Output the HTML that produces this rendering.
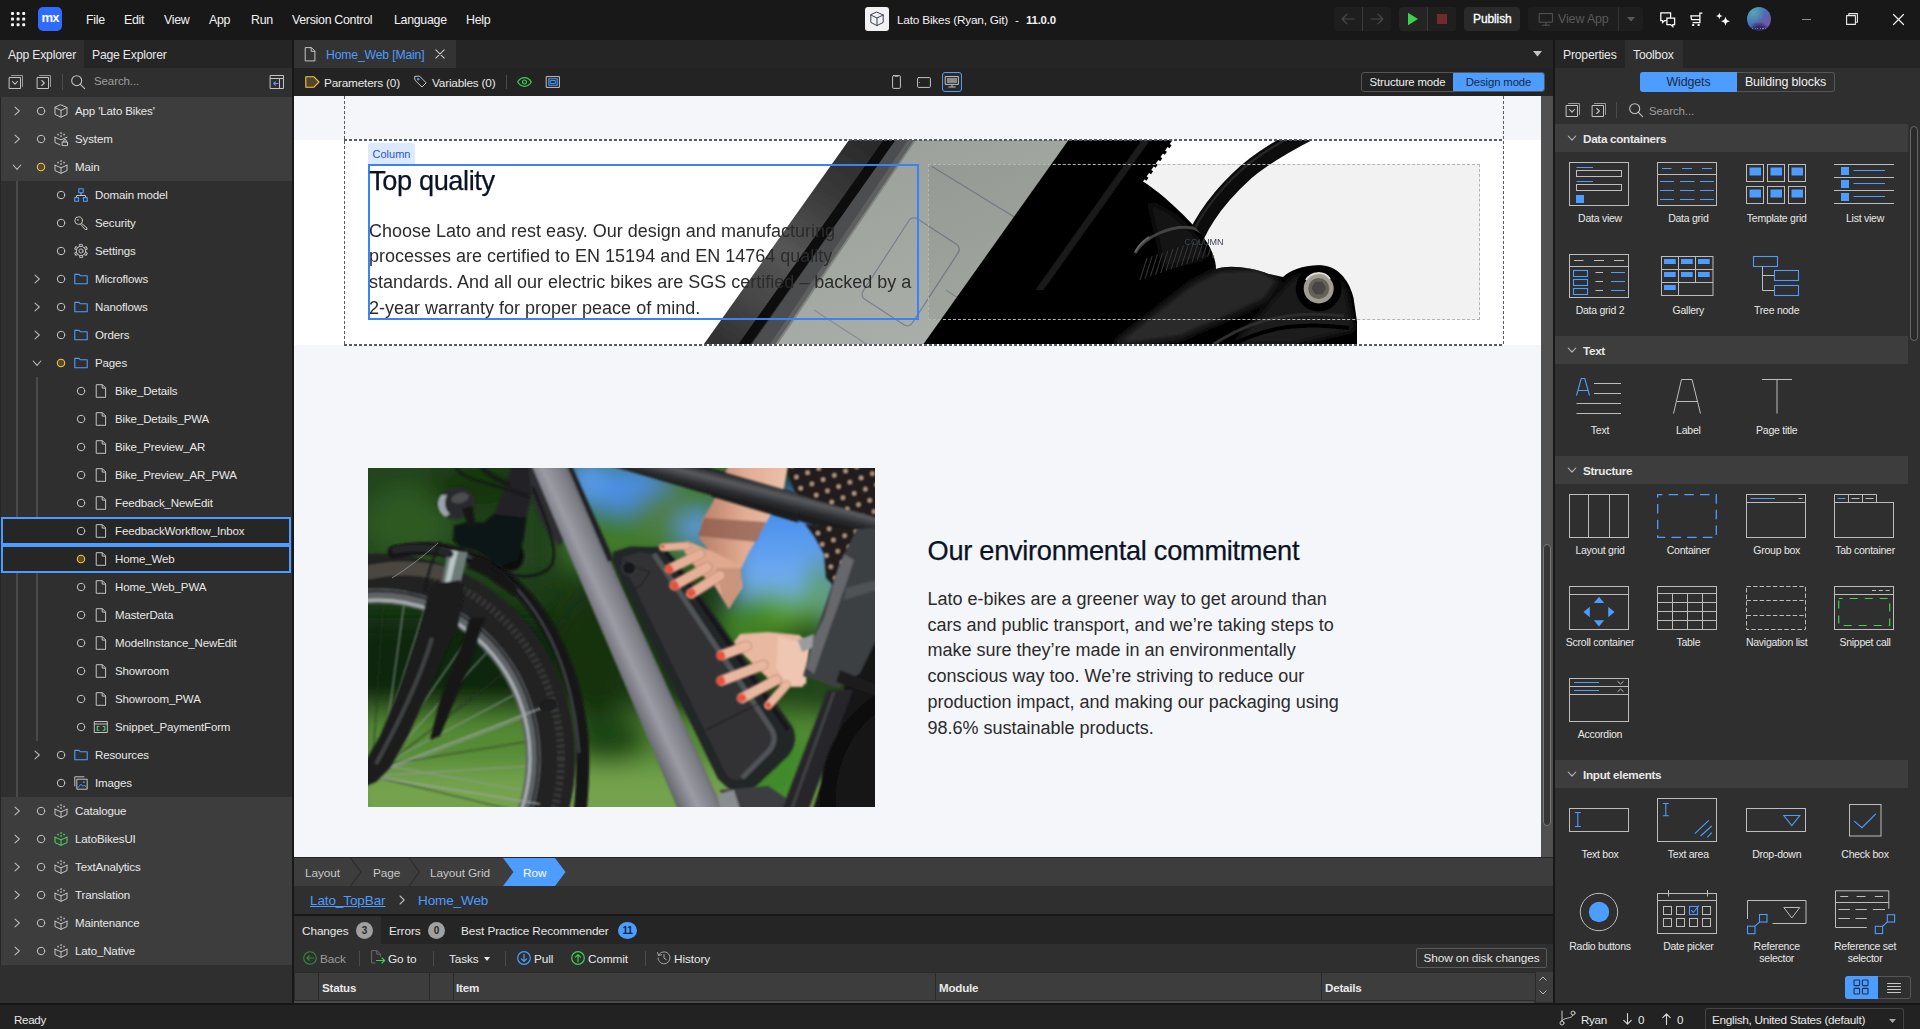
<!DOCTYPE html>
<html lang="en"><head><meta charset="utf-8"><title>Lato Bikes (Ryan, Git) - 11.0.0</title>
<style>
*{box-sizing:border-box;margin:0;padding:0}
html,body{width:1920px;height:1029px;overflow:hidden;background:#181818}
body{position:relative;font-family:"Liberation Sans",sans-serif;font-size:11.6px;color:#e8e8e8;letter-spacing:-0.1px}
i{position:absolute;display:block;font-style:normal;line-height:0}
b{position:absolute;display:block;font-weight:normal}
svg{display:block;overflow:visible}
.t{position:absolute;white-space:nowrap;line-height:28px;top:0}
.vsep{width:1px;background:#4a4a4a}
#title{position:absolute;left:0;top:0;width:1920px;height:40px;background:#181818}
#left{position:absolute;left:0;top:40px;width:292px;height:963px;background:#2f2f2f}
.ptabs{position:relative;height:28px;background:#252525;display:flex}
.ptab{position:relative;height:28px;font-size:12.2px;letter-spacing:-0.2px}
.ptab .t,.ctab .t,.ctool .t{top:1px}
.ptab.act{background:#2f2f2f}
.ptool{position:relative;height:28px;background:#2f2f2f}
.ph{position:absolute;top:-1px;line-height:28px;color:#9e9e9e;font-size:11.5px}
.tree{position:absolute;left:0;top:57px;width:292px;height:906px}
.tree:before{content:"";position:absolute;left:0;top:0;width:1px;height:868px;background:#262626;z-index:3}
.row{position:relative;height:28px;margin-left:0}
.row.mod{background:#3d3d3d}
.row.sel{outline:2px solid #4d9cff;outline-offset:-2px;background:#262626;margin-left:1px;margin-right:1px}
.row.sel>*{margin-left:-1px}
.row .t{font-size:11.5px;letter-spacing:-0.12px}
.guide{width:2px;background:#4a4a4a}
.mx{position:absolute;left:38px;top:7px;width:24px;height:24px;border-radius:5px;background:#2f6bff;color:#fff;font-weight:bold;font-size:13px;text-align:center;line-height:22px;letter-spacing:-0.8px}
.menu{position:absolute;top:0;line-height:41px;font-size:12.4px;color:#f2f2f2;white-space:nowrap;letter-spacing:-0.3px}
.appico{position:absolute;left:865px;top:7px;width:24px;height:24px;border-radius:3px;background:#f2f2f2;padding:1px}
.apptitle{position:absolute;top:0;line-height:41px;font-size:11.8px;color:#f2f2f2;white-space:nowrap;letter-spacing:-0.2px}
.tbtn{position:absolute;top:7px;height:24px;border-radius:4px;background:#1e1e1e}
.avatar{position:absolute;left:1747px;top:7px;width:24px;height:24px;border-radius:50%;background:radial-gradient(circle at 50% 108%,#2f2a66 0 22%,transparent 40%),radial-gradient(circle at 28% 22%,#56a3b6 0,transparent 45%),radial-gradient(circle at 85% 70%,#7259a8 0,transparent 55%),linear-gradient(135deg,#4a8fb0,#4870b4 50%,#62509f)}
.avatar:after{content:"";position:absolute;left:5px;top:20.5px;width:14px;height:1px;background:repeating-linear-gradient(90deg,rgba(255,255,255,.4) 0 1.2px,transparent 1.2px 2.6px);border-radius:1px}
#center{position:absolute;left:294px;top:40px;width:1259px;height:874px;background:#252525}
.ctabs{position:relative;height:28px;background:#252525}
.ctab{position:absolute;left:0;top:0;width:162px;height:28px;background:#333}
.ctool{position:relative;height:28px;background:#232323}
.seg{position:absolute;top:4px;height:20px;display:flex;border:1px solid #555;border-radius:3px;font-size:11.4px;letter-spacing:-0.15px;line-height:18px;text-align:center;overflow:hidden;white-space:nowrap}
.seg .s1{background:#4d9cff;color:#1b2a40}
.seg .s0{color:#f0f0f0}
#canvas{position:absolute;left:0;top:56px;width:1247px;height:761px;background:#f5f6fa;overflow:hidden;font-family:"Liberation Sans",sans-serif;letter-spacing:0}
.white{position:absolute;left:0;top:44px;width:1247px;height:205px;background:#fff}
.vd{width:1px;background:repeating-linear-gradient(180deg,#565b66 0 3px,transparent 3px 5px)}
.hdash{height:2px;background:repeating-linear-gradient(90deg,#565b66 0 3px,transparent 3px 5px)}

.collabel{position:absolute;left:74px;top:47px;width:47px;height:21px;background:#dbeafe;color:#2b4fd8;font-size:11px;line-height:23px;text-align:center;border-radius:3px 3px 0 0}
.col1{position:absolute;left:74px;top:68px;width:551px;height:156px;border:2px solid #3b82f6}
.col2{position:absolute;left:634px;top:68px;width:552px;height:156px;border:1px dashed #b5b5b5;background:rgba(0,0,0,0.05);color:#3a4150;font-size:9px;text-align:center;line-height:154px}
.hd{-webkit-text-stroke:0.25px #0a1325;position:absolute;font-size:27.2px;font-weight:normal;color:#0a1325;line-height:34px;white-space:nowrap;letter-spacing:-0.05px}
.bd{position:absolute;font-size:18px;line-height:25.71px;color:#2b2b2b;white-space:nowrap}

#p2{position:absolute;left:74px;top:372px;width:507px;height:339px;background:#456}
.vscroll{position:absolute;left:1247px;top:56px;width:12px;height:761px;background:#505050}
.vscroll .thumb{left:2px;top:448px;width:8px;height:282px;border-radius:4px;background:#363636;border:1px solid #777}
.crumbs{position:absolute;left:0;top:818px;width:1259px;height:28px;background:#3d3d3d;font-size:11.8px;color:#c8c8c8}
.crumbs .t,.path .t,.btabs .t,.btool .t,.thead .t{top:1px}
.path{position:absolute;left:0;top:846px;width:1259px;height:28px;background:#2f2f2f;font-size:13.5px;color:#4d9cff}
#right{position:absolute;left:1555px;top:40px;width:365px;height:963px;background:#2f2f2f}
.seg2{position:absolute;top:4px;height:20px;display:flex;border-radius:3px;font-size:12.4px;line-height:20px;text-align:center;white-space:nowrap}
.seg2 .s1{background:#4d9cff;color:#1b2a40;border-radius:3px 0 0 3px}
.seg2 .s0{color:#f0f0f0;border:1px solid #555;border-left:none;border-radius:0 3px 3px 0;line-height:18px}
.tbx{position:absolute;left:0;top:84px;width:353px;height:880px;overflow:hidden}
.sech{position:relative;height:28px;padding-left:1px;background:#3d3d3d;font-weight:bold;font-size:11.7px;letter-spacing:-0.3px}
.sech .t{top:0.5px}
.grid{display:flex;flex-wrap:wrap;padding-left:1px;width:360px}
.w{position:relative;width:88.35px;height:92px;text-align:center;font-size:10.5px;line-height:12px;letter-spacing:-0.25px}
.w svg{position:absolute;left:13px;top:10px}
.w span{position:absolute;left:-10px;width:108px;top:60.4px;display:block}
.sb2{left:355px;top:86px;width:8px;height:215px;border:1px solid #666;border-radius:4px;background:#2a2a2a}
.vt{position:absolute;left:290px;top:936px;width:66px;height:23px;display:flex}
.vt .a{position:relative;width:33px;height:23px;background:#4d9cff;border-radius:3px 0 0 3px}
.vt .b{position:relative;width:33px;height:23px;border:1px solid #555;border-left:none;border-radius:0 3px 3px 0}
#bottom{position:absolute;left:294px;top:916px;width:1259px;height:87px;background:#2f2f2f}
.btabs{position:relative;height:28px;background:#252525;font-size:11.8px}
.bt{position:absolute;top:0;height:28px}
.bt.act{background:#2f2f2f}
.bdg{position:absolute;top:5.5px;width:17px;height:17px;border-radius:50%;background:#a0a0a0;color:#2a2a2a;font-style:normal;font-size:10px;font-weight:bold;text-align:center;line-height:17px;letter-spacing:-0.3px}
.bdg.blue{background:#4d9cff;color:#13233c;width:19px}
.btool{position:relative;height:28px;font-size:11.8px}
.sodc{position:absolute;left:1122px;top:4px;width:131px;height:20px;border:1px solid #5a5a5a;border-radius:2px;font-size:11.8px;line-height:19px;text-align:center;white-space:nowrap}
.thead{position:relative;height:29px;background:#2a2a2a;font-weight:bold;font-size:11.6px;letter-spacing:-0.2px}
.thead div{position:absolute;top:1px;height:27px;background:#3d3d3d}
#status{position:absolute;left:0;top:1003px;width:1920px;height:26px;background:#222;border-top:2px solid #171717;font-size:11.6px;letter-spacing:-0.3px}
.lang{position:absolute;left:1705px;top:3px;width:199px;height:23px;border:1px solid #444;border-bottom:none;border-radius:3px 3px 0 0;font-size:11.8px}

</style></head><body>
<div id="title">
<i style="left:10.9px;top:11.8px"><svg width="15" height="15" viewBox="0 0 15 15" style="" fill="none" stroke-linecap="round" stroke-linejoin="round"><rect x="0.0" y="0.0" width="3" height="3" rx="0.9" fill="#f5f5f5"/><rect x="0.0" y="5.6" width="3" height="3" rx="0.9" fill="#f5f5f5"/><rect x="0.0" y="11.2" width="3" height="3" rx="0.9" fill="#f5f5f5"/><rect x="5.6" y="0.0" width="3" height="3" rx="0.9" fill="#f5f5f5"/><rect x="5.6" y="5.6" width="3" height="3" rx="0.9" fill="#f5f5f5"/><rect x="5.6" y="11.2" width="3" height="3" rx="0.9" fill="#f5f5f5"/><rect x="11.2" y="0.0" width="3" height="3" rx="0.9" fill="#f5f5f5"/><rect x="11.2" y="5.6" width="3" height="3" rx="0.9" fill="#f5f5f5"/><rect x="11.2" y="11.2" width="3" height="3" rx="0.9" fill="#f5f5f5"/></svg></i>
<div class="mx"><span>mx</span></div>
<span class="menu" style="left:86px">File</span>
<span class="menu" style="left:124px">Edit</span>
<span class="menu" style="left:164px">View</span>
<span class="menu" style="left:209px">App</span>
<span class="menu" style="left:251px">Run</span>
<span class="menu" style="left:292px">Version Control</span>
<span class="menu" style="left:394px">Language</span>
<span class="menu" style="left:466px">Help</span>
<div class="appico"><svg width="22" height="22" viewBox="0 0 22 22" style="" fill="none" stroke-linecap="round" stroke-linejoin="round"><path d="M11 4.2 L17.2 7 V14.4 L11 17.6 L4.8 14.4 V7 Z M4.8 7 L11 10 L17.2 7 M11 10 V17.6" stroke="#3a3f55" stroke-width="1"/></svg></div>
<span class="apptitle" style="left:897px">Lato Bikes (Ryan, Git)</span><span class="apptitle" style="left:1015px">-</span><span class="apptitle" style="left:1026px;font-weight:bold;font-size:11.4px">11.0.0</span>
<div class="tbtn" style="left:1334px;width:57px"></div><b class="vsep" style="left:1362px;top:7px;height:24px;background:#3a3a3a"></b>
<i style="left:1341px;top:13px"><svg width="14" height="12" viewBox="0 0 14 12" style="" fill="none" stroke-linecap="round" stroke-linejoin="round"><path d="M13 6 H1.5 M6 1.2 L1.2 6 L6 10.8" stroke="#4a4a4a" stroke-width="1.2"/></svg></i><i style="left:1370px;top:13px"><svg width="14" height="12" viewBox="0 0 14 12" style="" fill="none" stroke-linecap="round" stroke-linejoin="round"><path d="M1 6 H12.5 M8 1.2 L12.8 6 L8 10.8" stroke="#4a4a4a" stroke-width="1.2"/></svg></i>
<div class="tbtn" style="left:1399px;width:57px;background:#242424"></div><b class="vsep" style="left:1427px;top:7px;height:24px;background:#3a3a3a"></b><b style="left:1428px;top:7px;width:28px;height:24px;background:#1f1f1f;border-radius:0 4px 4px 0"></b>
<i style="left:1407px;top:12px"><svg width="12" height="14" viewBox="0 0 12 14" style="" fill="none" stroke-linecap="round" stroke-linejoin="round"><path d='M1 0.8 L11 7 L1 13.2 Z' fill='#3fd04f'/></svg></i>
<b style="left:1437px;top:14px;width:10px;height:10px;background:#6e2c2c"></b>
<div class="tbtn" style="left:1464px;width:56px;background:#2a2a2a"><span class="t" style="left:9px;line-height:25px;font-size:12px;color:#fff;-webkit-text-stroke:0.3px #fff">Publish</span></div>
<div class="tbtn" style="left:1528px;width:115px;background:#1e1e1e"><span class="t" style="left:30px;line-height:25px;font-size:12.4px;color:#5a5a5a">View App</span></div><b class="vsep" style="left:1618px;top:7px;height:24px;background:#333"></b>
<i style="left:1539px;top:13px"><svg width="14" height="13" viewBox="0 0 14 13" style="" fill="none" stroke-linecap="round" stroke-linejoin="round"><rect x="0.6" y="0.6" width="12.8" height="8.6" stroke="#555" stroke-width="1"/><path d="M7 9.4 V12 M3.6 12.2 H10.4" stroke="#555" stroke-width="1"/></svg></i>
<i style="left:1627px;top:17px"><svg width="8" height="5" viewBox="0 0 8 5" style="" fill="none" stroke-linecap="round" stroke-linejoin="round"><path d='M0 0 H8 L4 4.6 Z' fill='#5a5a5a'/></svg></i>
<i style="left:1660.2px;top:11.9px"><svg width="16" height="15" viewBox="0 0 16 15" style="" fill="none" stroke-linecap="round" stroke-linejoin="round"><path d="M10.6 5.4 V0.9 H0.8 V8.6 H2.6 V10.6 L4.6 8.6 H6.4" stroke="#fff" stroke-width="1.25" stroke-linejoin="miter"/><path d="M6.9 6.1 H14.6 V12.6 H12.8 V14.6 L10.6 12.6 H6.9 Z" stroke="#fff" stroke-width="1.25" stroke-linejoin="miter"/></svg></i>
<i style="left:1689.6px;top:12px"><svg width="13" height="15" viewBox="0 0 13 15" style="" fill="none" stroke-linecap="round" stroke-linejoin="round"><path d="M12.4 1 H9.9 V10.6 H2.6 M9.9 3.8 H0.9 L1.5 7.6 H9.9" stroke="#fff" stroke-width="1.25" stroke-linejoin="miter" stroke-linecap="butt"/><rect x="2.2" y="12" width="2" height="2" fill="#fff"/><rect x="7.6" y="12" width="2" height="2" fill="#fff"/></svg></i>
<i style="left:1714px;top:10px"><svg width="18" height="18" viewBox="0 0 18 18" style="" fill="none" stroke-linecap="round" stroke-linejoin="round"><path d="M5.3 2.6 C6.048 5.252 6.048 5.252 8.7 6 C6.048 6.748 6.048 6.748 5.3 9.4 C4.552 6.748 4.552 6.748 1.9 6 C4.552 5.252 4.552 5.252 5.3 2.6 Z" fill="#fff"/><path d="M11.5 6.6 C12.512 10.187999999999999 12.512 10.187999999999999 16.1 11.2 C12.512 12.212 12.512 12.212 11.5 15.799999999999999 C10.488 12.212 10.488 12.212 6.9 11.2 C10.488 10.187999999999999 10.488 10.187999999999999 11.5 6.6 Z" fill="#fff"/></svg></i>
<div class="avatar"></div>
<b style="left:1801.5px;top:18.5px;width:9.5px;height:1.6px;background:#909090"></b>
<i style="left:1846px;top:13px"><svg width="12" height="12" viewBox="0 0 12 12" style="" fill="none" stroke-linecap="round" stroke-linejoin="round"><rect x="0.6" y="2.6" width="8.8" height="8.8" stroke="#e8e8e8" stroke-width="1.1"/><path d="M2.8 2.4 V0.6 H11.4 V9.2 H9.6" stroke="#e8e8e8" stroke-width="1.1"/></svg></i>
<i style="left:1893px;top:14px"><svg width="11" height="11" viewBox="0 0 11 11" style="" fill="none" stroke-linecap="round" stroke-linejoin="round"><path d='M0.5 0.5 L10.5 10.5 M10.5 0.5 L0.5 10.5' stroke='#f0f0f0' stroke-width='1.2'/></svg></i>
</div>
<div id="left">
<div class="ptabs"><div class="ptab act" style="width:84px"><span class="t" style="left:8px">App Explorer</span></div><div class="ptab" style="width:90px"><span class="t" style="left:8px">Page Explorer</span></div></div>
<div class="ptool"><i style="left:8px;top:6px"><svg width="16" height="16" viewBox="0 0 16 16" style="" fill="none" stroke-linecap="round" stroke-linejoin="round"><path d="M3.5 1.5 H14.5 V12.5" stroke="#9a9a9a" stroke-width="1"/><rect x="1.5" y="3.5" width="11" height="11" stroke="#c4c4c4" stroke-width="1"/><path d="M4.5 7.5 L7 10.2 L9.5 7.5" stroke="#c4c4c4" stroke-width="1.1"/></svg></i><i style="left:36px;top:6px"><svg width="16" height="16" viewBox="0 0 16 16" style="" fill="none" stroke-linecap="round" stroke-linejoin="round"><path d="M3.5 1.5 H14.5 V12.5" stroke="#9a9a9a" stroke-width="1"/><rect x="1.5" y="3.5" width="11" height="11" stroke="#c4c4c4" stroke-width="1"/><path d="M5.7 6.5 L8.4 9 L5.7 11.5" stroke="#c4c4c4" stroke-width="1.1"/></svg></i><b class="vsep" style="left:62px;top:6px;height:16px"></b><i style="left:70px;top:6px"><svg width="16" height="16" viewBox="0 0 16 16" style="" fill="none" stroke-linecap="round" stroke-linejoin="round"><circle cx="6.7" cy="6.7" r="5" stroke="#c4c4c4" stroke-width="1.1"/><path d="M10.4 10.4 L14.6 14.6" stroke="#c4c4c4" stroke-width="1.1"/></svg></i><span class="ph" style="left:94px">Search...</span><i style="left:268.5px;top:6px"><svg width="16" height="16" viewBox="0 0 16 16" style="" fill="none" stroke-linecap="round" stroke-linejoin="round"><rect x="1.5" y="1.5" width="13" height="13" stroke="#c4c4c4" stroke-width="1"/><path d="M1.5 4.5 H14.5 M10.5 4.5 V14.5" stroke="#c4c4c4" stroke-width="1"/><path d="M9 9.5 H4.8 M6.5 7.8 L4.7 9.5 L6.5 11.2" stroke="#4d9cff" stroke-width="1.1"/></svg></i></div>
<div class="tree">
<b class="guide" style="left:15.5px;top:84px;height:616px"></b><b class="guide" style="left:35.5px;top:280px;height:364px"></b>
<div class="row mod"><i style="left:13px;top:9px"><svg width="8" height="10" viewBox="0 0 8 10" style="" fill="none" stroke-linecap="round" stroke-linejoin="round"><path d="M2 1.2 L6.3 5 L2 8.8" stroke="#b8b8b8" stroke-width="1.1"/></svg></i><i style="left:36px;top:9px"><svg width="10" height="10" viewBox="0 0 10 10" style="" fill="none" stroke-linecap="round" stroke-linejoin="round"><circle cx="5" cy="5" r="3.7" stroke="#c8c8c8" stroke-width="1"/></svg></i><i style="left:54px;top:7px"><svg width="14" height="14" viewBox="0 0 14 14" style="" fill="none" stroke-linecap="round" stroke-linejoin="round"><path d="M7 0.8 L13 3.6 V10.4 L7 13.2 L1 10.4 V3.6 Z M1 3.6 L7 6.4 L13 3.6 M7 6.4 V13.2" stroke="#c4c4c4" stroke-width="1"/></svg></i><span class="t" style="left:75px">App 'Lato Bikes'</span></div>
<div class="row mod"><i style="left:13px;top:9px"><svg width="8" height="10" viewBox="0 0 8 10" style="" fill="none" stroke-linecap="round" stroke-linejoin="round"><path d="M2 1.2 L6.3 5 L2 8.8" stroke="#b8b8b8" stroke-width="1.1"/></svg></i><i style="left:36px;top:9px"><svg width="10" height="10" viewBox="0 0 10 10" style="" fill="none" stroke-linecap="round" stroke-linejoin="round"><circle cx="5" cy="5" r="3.7" stroke="#c8c8c8" stroke-width="1"/></svg></i><i style="left:54px;top:7px"><svg width="14" height="14" viewBox="0 0 14 14" style="" fill="none" stroke-linecap="round" stroke-linejoin="round"><path d="M1 5.2 V10.6 L6 12.8 M1 5.2 L7 7.8 L13 5.2" stroke="#c4c4c4" stroke-width="1"/><rect x="8.5" y="10" width="5" height="3.6" stroke="#c4c4c4" stroke-width="1"/><path d="M9.7 10 V8.9 a1.3 1.3 0 0 1 2.6 0 V10" stroke="#c4c4c4" stroke-width="1"/><g fill="#c4c4c4" stroke="none"><rect x="6.3" y="0.3" width="1.5" height="1.5"/><rect x="3.3" y="1.8" width="1.5" height="1.5"/><rect x="9.3" y="1.8" width="1.5" height="1.5"/><rect x="6.3" y="3.3" width="1.5" height="1.5"/></g></svg></i><span class="t" style="left:75px">System</span></div>
<div class="row mod"><i style="left:12px;top:10px"><svg width="10" height="8" viewBox="0 0 10 8" style="" fill="none" stroke-linecap="round" stroke-linejoin="round"><path d="M1.2 2 L5 6.3 L8.8 2" stroke="#b8b8b8" stroke-width="1.1"/></svg></i><i style="left:36px;top:9px"><svg width="10" height="10" viewBox="0 0 10 10" style="" fill="none" stroke-linecap="round" stroke-linejoin="round"><circle cx="5" cy="5" r="3.7" stroke="#f5c542" stroke-width="1.1" fill="#5c4a2a"/></svg></i><i style="left:54px;top:7px"><svg width="14" height="14" viewBox="0 0 14 14" style="" fill="none" stroke-linecap="round" stroke-linejoin="round"><path d="M1 5.2 V10.6 L7 13.3 L13 10.6 V5.2 M1 5.2 L7 7.8 L13 5.2 M7 7.8 V13.3" stroke="#c4c4c4" stroke-width="1"/><g fill="#c4c4c4" stroke="none"><rect x="6.3" y="0.3" width="1.5" height="1.5"/><rect x="3.3" y="1.8" width="1.5" height="1.5"/><rect x="9.3" y="1.8" width="1.5" height="1.5"/><rect x="6.3" y="3.3" width="1.5" height="1.5"/></g></svg></i><span class="t" style="left:75px">Main</span></div>
<div class="row"><i style="left:56px;top:9px"><svg width="10" height="10" viewBox="0 0 10 10" style="" fill="none" stroke-linecap="round" stroke-linejoin="round"><circle cx="5" cy="5" r="3.7" stroke="#c8c8c8" stroke-width="1"/></svg></i><i style="left:74px;top:7px"><svg width="14" height="14" viewBox="0 0 14 14" style="" fill="none" stroke-linecap="round" stroke-linejoin="round"><path d="M7 5 V7.5 M2.5 9.5 V7.5 H11.5 V9.5" stroke="#c4c4c4" stroke-width="1"/><rect x="4.8" y="0.8" width="4.4" height="4" stroke="#4d9cff" stroke-width="1.1"/><rect x="0.7" y="9.6" width="3.8" height="3.7" stroke="#4d9cff" stroke-width="1.1"/><rect x="9.5" y="9.6" width="3.8" height="3.7" stroke="#4d9cff" stroke-width="1.1"/></svg></i><span class="t" style="left:95px">Domain model</span></div>
<div class="row"><i style="left:56px;top:9px"><svg width="10" height="10" viewBox="0 0 10 10" style="" fill="none" stroke-linecap="round" stroke-linejoin="round"><circle cx="5" cy="5" r="3.7" stroke="#c8c8c8" stroke-width="1"/></svg></i><i style="left:74px;top:7px"><svg width="14" height="14" viewBox="0 0 14 14" style="" fill="none" stroke-linecap="round" stroke-linejoin="round"><circle cx="4.6" cy="4.6" r="3.8" stroke="#c4c4c4" stroke-width="1"/><circle cx="3.9" cy="3.9" r="0.8" fill="#c4c4c4"/><path d="M7.4 7.2 L13 12 V13.5 H11.2 L6.4 8" stroke="#c4c4c4" stroke-width="1"/></svg></i><span class="t" style="left:95px">Security</span></div>
<div class="row"><i style="left:56px;top:9px"><svg width="10" height="10" viewBox="0 0 10 10" style="" fill="none" stroke-linecap="round" stroke-linejoin="round"><circle cx="5" cy="5" r="3.7" stroke="#c8c8c8" stroke-width="1"/></svg></i><i style="left:74px;top:7px"><svg width="14" height="14" viewBox="0 0 14 14" style="" fill="none" stroke-linecap="round" stroke-linejoin="round"><rect x="5.7" y="0.4" width="2.6" height="2.2" transform="rotate(0 7 7)" stroke="#c4c4c4" stroke-width="0.9" fill="#2f2f2f"/><rect x="5.7" y="0.4" width="2.6" height="2.2" transform="rotate(60 7 7)" stroke="#c4c4c4" stroke-width="0.9" fill="#2f2f2f"/><rect x="5.7" y="0.4" width="2.6" height="2.2" transform="rotate(120 7 7)" stroke="#c4c4c4" stroke-width="0.9" fill="#2f2f2f"/><rect x="5.7" y="0.4" width="2.6" height="2.2" transform="rotate(180 7 7)" stroke="#c4c4c4" stroke-width="0.9" fill="#2f2f2f"/><rect x="5.7" y="0.4" width="2.6" height="2.2" transform="rotate(240 7 7)" stroke="#c4c4c4" stroke-width="0.9" fill="#2f2f2f"/><rect x="5.7" y="0.4" width="2.6" height="2.2" transform="rotate(300 7 7)" stroke="#c4c4c4" stroke-width="0.9" fill="#2f2f2f"/><circle cx="7" cy="7" r="4.7" stroke="#c4c4c4" stroke-width="1" fill="#2f2f2f"/><circle cx="7" cy="7" r="2.1" stroke="#c4c4c4" stroke-width="1"/></svg></i><span class="t" style="left:95px">Settings</span></div>
<div class="row"><i style="left:33px;top:9px"><svg width="8" height="10" viewBox="0 0 8 10" style="" fill="none" stroke-linecap="round" stroke-linejoin="round"><path d="M2 1.2 L6.3 5 L2 8.8" stroke="#b8b8b8" stroke-width="1.1"/></svg></i><i style="left:56px;top:9px"><svg width="10" height="10" viewBox="0 0 10 10" style="" fill="none" stroke-linecap="round" stroke-linejoin="round"><circle cx="5" cy="5" r="3.7" stroke="#c8c8c8" stroke-width="1"/></svg></i><i style="left:74px;top:7px"><svg width="14" height="14" viewBox="0 0 14 14" style="" fill="none" stroke-linecap="round" stroke-linejoin="round"><path d="M0.8 2.4 H5 L6.4 3.8 H13.2 V11.8 H0.8 Z" stroke="#4d9cff" stroke-width="1.1"/></svg></i><span class="t" style="left:95px">Microflows</span></div>
<div class="row"><i style="left:33px;top:9px"><svg width="8" height="10" viewBox="0 0 8 10" style="" fill="none" stroke-linecap="round" stroke-linejoin="round"><path d="M2 1.2 L6.3 5 L2 8.8" stroke="#b8b8b8" stroke-width="1.1"/></svg></i><i style="left:56px;top:9px"><svg width="10" height="10" viewBox="0 0 10 10" style="" fill="none" stroke-linecap="round" stroke-linejoin="round"><circle cx="5" cy="5" r="3.7" stroke="#c8c8c8" stroke-width="1"/></svg></i><i style="left:74px;top:7px"><svg width="14" height="14" viewBox="0 0 14 14" style="" fill="none" stroke-linecap="round" stroke-linejoin="round"><path d="M0.8 2.4 H5 L6.4 3.8 H13.2 V11.8 H0.8 Z" stroke="#4d9cff" stroke-width="1.1"/></svg></i><span class="t" style="left:95px">Nanoflows</span></div>
<div class="row"><i style="left:33px;top:9px"><svg width="8" height="10" viewBox="0 0 8 10" style="" fill="none" stroke-linecap="round" stroke-linejoin="round"><path d="M2 1.2 L6.3 5 L2 8.8" stroke="#b8b8b8" stroke-width="1.1"/></svg></i><i style="left:56px;top:9px"><svg width="10" height="10" viewBox="0 0 10 10" style="" fill="none" stroke-linecap="round" stroke-linejoin="round"><circle cx="5" cy="5" r="3.7" stroke="#c8c8c8" stroke-width="1"/></svg></i><i style="left:74px;top:7px"><svg width="14" height="14" viewBox="0 0 14 14" style="" fill="none" stroke-linecap="round" stroke-linejoin="round"><path d="M0.8 2.4 H5 L6.4 3.8 H13.2 V11.8 H0.8 Z" stroke="#4d9cff" stroke-width="1.1"/></svg></i><span class="t" style="left:95px">Orders</span></div>
<div class="row"><i style="left:32px;top:10px"><svg width="10" height="8" viewBox="0 0 10 8" style="" fill="none" stroke-linecap="round" stroke-linejoin="round"><path d="M1.2 2 L5 6.3 L8.8 2" stroke="#b8b8b8" stroke-width="1.1"/></svg></i><i style="left:56px;top:9px"><svg width="10" height="10" viewBox="0 0 10 10" style="" fill="none" stroke-linecap="round" stroke-linejoin="round"><circle cx="5" cy="5" r="3.7" stroke="#f5c542" stroke-width="1.1" fill="#5c4a2a"/></svg></i><i style="left:74px;top:7px"><svg width="14" height="14" viewBox="0 0 14 14" style="" fill="none" stroke-linecap="round" stroke-linejoin="round"><path d="M0.8 2.4 H5 L6.4 3.8 H13.2 V11.8 H0.8 Z" stroke="#4d9cff" stroke-width="1.1"/></svg></i><span class="t" style="left:95px">Pages</span></div>
<div class="row"><i style="left:76px;top:9px"><svg width="10" height="10" viewBox="0 0 10 10" style="" fill="none" stroke-linecap="round" stroke-linejoin="round"><circle cx="5" cy="5" r="3.7" stroke="#c8c8c8" stroke-width="1"/></svg></i><i style="left:94px;top:7px"><svg width="14" height="14" viewBox="0 0 14 14" style="" fill="none" stroke-linecap="round" stroke-linejoin="round"><path d="M2.6 0.7 H8.4 L11.6 3.9 V13.3 H2.6 Z M8.2 0.9 V4.1 H11.4" stroke="#c4c4c4" stroke-width="1"/></svg></i><span class="t" style="left:115px">Bike_Details</span></div>
<div class="row"><i style="left:76px;top:9px"><svg width="10" height="10" viewBox="0 0 10 10" style="" fill="none" stroke-linecap="round" stroke-linejoin="round"><circle cx="5" cy="5" r="3.7" stroke="#c8c8c8" stroke-width="1"/></svg></i><i style="left:94px;top:7px"><svg width="14" height="14" viewBox="0 0 14 14" style="" fill="none" stroke-linecap="round" stroke-linejoin="round"><path d="M2.6 0.7 H8.4 L11.6 3.9 V13.3 H2.6 Z M8.2 0.9 V4.1 H11.4" stroke="#c4c4c4" stroke-width="1"/></svg></i><span class="t" style="left:115px">Bike_Details_PWA</span></div>
<div class="row"><i style="left:76px;top:9px"><svg width="10" height="10" viewBox="0 0 10 10" style="" fill="none" stroke-linecap="round" stroke-linejoin="round"><circle cx="5" cy="5" r="3.7" stroke="#c8c8c8" stroke-width="1"/></svg></i><i style="left:94px;top:7px"><svg width="14" height="14" viewBox="0 0 14 14" style="" fill="none" stroke-linecap="round" stroke-linejoin="round"><path d="M2.6 0.7 H8.4 L11.6 3.9 V13.3 H2.6 Z M8.2 0.9 V4.1 H11.4" stroke="#c4c4c4" stroke-width="1"/></svg></i><span class="t" style="left:115px">Bike_Preview_AR</span></div>
<div class="row"><i style="left:76px;top:9px"><svg width="10" height="10" viewBox="0 0 10 10" style="" fill="none" stroke-linecap="round" stroke-linejoin="round"><circle cx="5" cy="5" r="3.7" stroke="#c8c8c8" stroke-width="1"/></svg></i><i style="left:94px;top:7px"><svg width="14" height="14" viewBox="0 0 14 14" style="" fill="none" stroke-linecap="round" stroke-linejoin="round"><path d="M2.6 0.7 H8.4 L11.6 3.9 V13.3 H2.6 Z M8.2 0.9 V4.1 H11.4" stroke="#c4c4c4" stroke-width="1"/></svg></i><span class="t" style="left:115px">Bike_Preview_AR_PWA</span></div>
<div class="row"><i style="left:76px;top:9px"><svg width="10" height="10" viewBox="0 0 10 10" style="" fill="none" stroke-linecap="round" stroke-linejoin="round"><circle cx="5" cy="5" r="3.7" stroke="#c8c8c8" stroke-width="1"/></svg></i><i style="left:94px;top:7px"><svg width="14" height="14" viewBox="0 0 14 14" style="" fill="none" stroke-linecap="round" stroke-linejoin="round"><path d="M2.6 0.7 H8.4 L11.6 3.9 V13.3 H2.6 Z M8.2 0.9 V4.1 H11.4" stroke="#c4c4c4" stroke-width="1"/></svg></i><span class="t" style="left:115px">Feedback_NewEdit</span></div>
<div class="row sel"><i style="left:76px;top:9px"><svg width="10" height="10" viewBox="0 0 10 10" style="" fill="none" stroke-linecap="round" stroke-linejoin="round"><circle cx="5" cy="5" r="3.7" stroke="#c8c8c8" stroke-width="1"/></svg></i><i style="left:94px;top:7px"><svg width="14" height="14" viewBox="0 0 14 14" style="" fill="none" stroke-linecap="round" stroke-linejoin="round"><path d="M2.6 0.7 H8.4 L11.6 3.9 V13.3 H2.6 Z M8.2 0.9 V4.1 H11.4" stroke="#c4c4c4" stroke-width="1"/></svg></i><span class="t" style="left:115px">FeedbackWorkflow_Inbox</span></div>
<div class="row sel"><i style="left:76px;top:9px"><svg width="10" height="10" viewBox="0 0 10 10" style="" fill="none" stroke-linecap="round" stroke-linejoin="round"><circle cx="5" cy="5" r="3.7" stroke="#f5c542" stroke-width="1.1" fill="#5c4a2a"/></svg></i><i style="left:94px;top:7px"><svg width="14" height="14" viewBox="0 0 14 14" style="" fill="none" stroke-linecap="round" stroke-linejoin="round"><path d="M2.6 0.7 H8.4 L11.6 3.9 V13.3 H2.6 Z M8.2 0.9 V4.1 H11.4" stroke="#c4c4c4" stroke-width="1"/></svg></i><span class="t" style="left:115px">Home_Web</span></div>
<div class="row"><i style="left:76px;top:9px"><svg width="10" height="10" viewBox="0 0 10 10" style="" fill="none" stroke-linecap="round" stroke-linejoin="round"><circle cx="5" cy="5" r="3.7" stroke="#c8c8c8" stroke-width="1"/></svg></i><i style="left:94px;top:7px"><svg width="14" height="14" viewBox="0 0 14 14" style="" fill="none" stroke-linecap="round" stroke-linejoin="round"><path d="M2.6 0.7 H8.4 L11.6 3.9 V13.3 H2.6 Z M8.2 0.9 V4.1 H11.4" stroke="#c4c4c4" stroke-width="1"/></svg></i><span class="t" style="left:115px">Home_Web_PWA</span></div>
<div class="row"><i style="left:76px;top:9px"><svg width="10" height="10" viewBox="0 0 10 10" style="" fill="none" stroke-linecap="round" stroke-linejoin="round"><circle cx="5" cy="5" r="3.7" stroke="#c8c8c8" stroke-width="1"/></svg></i><i style="left:94px;top:7px"><svg width="14" height="14" viewBox="0 0 14 14" style="" fill="none" stroke-linecap="round" stroke-linejoin="round"><path d="M2.6 0.7 H8.4 L11.6 3.9 V13.3 H2.6 Z M8.2 0.9 V4.1 H11.4" stroke="#c4c4c4" stroke-width="1"/></svg></i><span class="t" style="left:115px">MasterData</span></div>
<div class="row"><i style="left:76px;top:9px"><svg width="10" height="10" viewBox="0 0 10 10" style="" fill="none" stroke-linecap="round" stroke-linejoin="round"><circle cx="5" cy="5" r="3.7" stroke="#c8c8c8" stroke-width="1"/></svg></i><i style="left:94px;top:7px"><svg width="14" height="14" viewBox="0 0 14 14" style="" fill="none" stroke-linecap="round" stroke-linejoin="round"><path d="M2.6 0.7 H8.4 L11.6 3.9 V13.3 H2.6 Z M8.2 0.9 V4.1 H11.4" stroke="#c4c4c4" stroke-width="1"/></svg></i><span class="t" style="left:115px">ModelInstance_NewEdit</span></div>
<div class="row"><i style="left:76px;top:9px"><svg width="10" height="10" viewBox="0 0 10 10" style="" fill="none" stroke-linecap="round" stroke-linejoin="round"><circle cx="5" cy="5" r="3.7" stroke="#c8c8c8" stroke-width="1"/></svg></i><i style="left:94px;top:7px"><svg width="14" height="14" viewBox="0 0 14 14" style="" fill="none" stroke-linecap="round" stroke-linejoin="round"><path d="M2.6 0.7 H8.4 L11.6 3.9 V13.3 H2.6 Z M8.2 0.9 V4.1 H11.4" stroke="#c4c4c4" stroke-width="1"/></svg></i><span class="t" style="left:115px">Showroom</span></div>
<div class="row"><i style="left:76px;top:9px"><svg width="10" height="10" viewBox="0 0 10 10" style="" fill="none" stroke-linecap="round" stroke-linejoin="round"><circle cx="5" cy="5" r="3.7" stroke="#c8c8c8" stroke-width="1"/></svg></i><i style="left:94px;top:7px"><svg width="14" height="14" viewBox="0 0 14 14" style="" fill="none" stroke-linecap="round" stroke-linejoin="round"><path d="M2.6 0.7 H8.4 L11.6 3.9 V13.3 H2.6 Z M8.2 0.9 V4.1 H11.4" stroke="#c4c4c4" stroke-width="1"/></svg></i><span class="t" style="left:115px">Showroom_PWA</span></div>
<div class="row"><i style="left:76px;top:9px"><svg width="10" height="10" viewBox="0 0 10 10" style="" fill="none" stroke-linecap="round" stroke-linejoin="round"><circle cx="5" cy="5" r="3.7" stroke="#c8c8c8" stroke-width="1"/></svg></i><i style="left:94px;top:7px"><svg width="14" height="14" viewBox="0 0 14 14" style="" fill="none" stroke-linecap="round" stroke-linejoin="round"><rect x="0.7" y="1.5" width="12.6" height="11" stroke="#c4c4c4" stroke-width="1"/><path d="M0.7 4 H13.3" stroke="#c4c4c4" stroke-width="1"/><path d="M5 6.5 H3.2 V10.3 H5 M9 6.5 H10.8 V10.3 H9" stroke="#4cd964" stroke-width="1.1"/></svg></i><span class="t" style="left:115px">Snippet_PaymentForm</span></div>
<div class="row"><i style="left:33px;top:9px"><svg width="8" height="10" viewBox="0 0 8 10" style="" fill="none" stroke-linecap="round" stroke-linejoin="round"><path d="M2 1.2 L6.3 5 L2 8.8" stroke="#b8b8b8" stroke-width="1.1"/></svg></i><i style="left:56px;top:9px"><svg width="10" height="10" viewBox="0 0 10 10" style="" fill="none" stroke-linecap="round" stroke-linejoin="round"><circle cx="5" cy="5" r="3.7" stroke="#c8c8c8" stroke-width="1"/></svg></i><i style="left:74px;top:7px"><svg width="14" height="14" viewBox="0 0 14 14" style="" fill="none" stroke-linecap="round" stroke-linejoin="round"><path d="M0.8 2.4 H5 L6.4 3.8 H13.2 V11.8 H0.8 Z" stroke="#4d9cff" stroke-width="1.1"/></svg></i><span class="t" style="left:95px">Resources</span></div>
<div class="row"><i style="left:56px;top:9px"><svg width="10" height="10" viewBox="0 0 10 10" style="" fill="none" stroke-linecap="round" stroke-linejoin="round"><circle cx="5" cy="5" r="3.7" stroke="#c8c8c8" stroke-width="1"/></svg></i><i style="left:74px;top:7px"><svg width="14" height="14" viewBox="0 0 14 14" style="" fill="none" stroke-linecap="round" stroke-linejoin="round"><path d="M0.8 10 V0.8 H10" stroke="#c4c4c4" stroke-width="1"/><rect x="3.2" y="3.2" width="10" height="10" stroke="#c4c4c4" stroke-width="1"/><path d="M3.6 12 L7 8.2 L9 10.4 L10.4 9 L13 11.8" stroke="#4d9cff" stroke-width="1"/><circle cx="9.8" cy="6.2" r="0.9" fill="#4d9cff"/></svg></i><span class="t" style="left:95px">Images</span></div>
<div class="row mod"><i style="left:13px;top:9px"><svg width="8" height="10" viewBox="0 0 8 10" style="" fill="none" stroke-linecap="round" stroke-linejoin="round"><path d="M2 1.2 L6.3 5 L2 8.8" stroke="#b8b8b8" stroke-width="1.1"/></svg></i><i style="left:36px;top:9px"><svg width="10" height="10" viewBox="0 0 10 10" style="" fill="none" stroke-linecap="round" stroke-linejoin="round"><circle cx="5" cy="5" r="3.7" stroke="#c8c8c8" stroke-width="1"/></svg></i><i style="left:54px;top:7px"><svg width="14" height="14" viewBox="0 0 14 14" style="" fill="none" stroke-linecap="round" stroke-linejoin="round"><path d="M1 5.2 V10.6 L7 13.3 L13 10.6 V5.2 M1 5.2 L7 7.8 L13 5.2 M7 7.8 V13.3" stroke="#c4c4c4" stroke-width="1"/><g fill="#c4c4c4" stroke="none"><rect x="6.3" y="0.3" width="1.5" height="1.5"/><rect x="3.3" y="1.8" width="1.5" height="1.5"/><rect x="9.3" y="1.8" width="1.5" height="1.5"/><rect x="6.3" y="3.3" width="1.5" height="1.5"/></g></svg></i><span class="t" style="left:75px">Catalogue</span></div>
<div class="row mod"><i style="left:13px;top:9px"><svg width="8" height="10" viewBox="0 0 8 10" style="" fill="none" stroke-linecap="round" stroke-linejoin="round"><path d="M2 1.2 L6.3 5 L2 8.8" stroke="#b8b8b8" stroke-width="1.1"/></svg></i><i style="left:36px;top:9px"><svg width="10" height="10" viewBox="0 0 10 10" style="" fill="none" stroke-linecap="round" stroke-linejoin="round"><circle cx="5" cy="5" r="3.7" stroke="#c8c8c8" stroke-width="1"/></svg></i><i style="left:54px;top:7px"><svg width="14" height="14" viewBox="0 0 14 14" style="" fill="none" stroke-linecap="round" stroke-linejoin="round"><path d="M1 5.2 V10.6 L7 13.3 L13 10.6 V5.2 M1 5.2 L7 7.8 L13 5.2 M7 7.8 V13.3" stroke="#4cd964" stroke-width="1"/><g fill="#4cd964" stroke="none"><rect x="6.3" y="0.3" width="1.5" height="1.5"/><rect x="3.3" y="1.8" width="1.5" height="1.5"/><rect x="9.3" y="1.8" width="1.5" height="1.5"/><rect x="6.3" y="3.3" width="1.5" height="1.5"/></g></svg></i><span class="t" style="left:75px">LatoBikesUI</span></div>
<div class="row mod"><i style="left:13px;top:9px"><svg width="8" height="10" viewBox="0 0 8 10" style="" fill="none" stroke-linecap="round" stroke-linejoin="round"><path d="M2 1.2 L6.3 5 L2 8.8" stroke="#b8b8b8" stroke-width="1.1"/></svg></i><i style="left:36px;top:9px"><svg width="10" height="10" viewBox="0 0 10 10" style="" fill="none" stroke-linecap="round" stroke-linejoin="round"><circle cx="5" cy="5" r="3.7" stroke="#c8c8c8" stroke-width="1"/></svg></i><i style="left:54px;top:7px"><svg width="14" height="14" viewBox="0 0 14 14" style="" fill="none" stroke-linecap="round" stroke-linejoin="round"><path d="M1 5.2 V10.6 L7 13.3 L13 10.6 V5.2 M1 5.2 L7 7.8 L13 5.2 M7 7.8 V13.3" stroke="#c4c4c4" stroke-width="1"/><g fill="#c4c4c4" stroke="none"><rect x="6.3" y="0.3" width="1.5" height="1.5"/><rect x="3.3" y="1.8" width="1.5" height="1.5"/><rect x="9.3" y="1.8" width="1.5" height="1.5"/><rect x="6.3" y="3.3" width="1.5" height="1.5"/></g></svg></i><span class="t" style="left:75px">TextAnalytics</span></div>
<div class="row mod"><i style="left:13px;top:9px"><svg width="8" height="10" viewBox="0 0 8 10" style="" fill="none" stroke-linecap="round" stroke-linejoin="round"><path d="M2 1.2 L6.3 5 L2 8.8" stroke="#b8b8b8" stroke-width="1.1"/></svg></i><i style="left:36px;top:9px"><svg width="10" height="10" viewBox="0 0 10 10" style="" fill="none" stroke-linecap="round" stroke-linejoin="round"><circle cx="5" cy="5" r="3.7" stroke="#c8c8c8" stroke-width="1"/></svg></i><i style="left:54px;top:7px"><svg width="14" height="14" viewBox="0 0 14 14" style="" fill="none" stroke-linecap="round" stroke-linejoin="round"><path d="M1 5.2 V10.6 L7 13.3 L13 10.6 V5.2 M1 5.2 L7 7.8 L13 5.2 M7 7.8 V13.3" stroke="#c4c4c4" stroke-width="1"/><g fill="#c4c4c4" stroke="none"><rect x="6.3" y="0.3" width="1.5" height="1.5"/><rect x="3.3" y="1.8" width="1.5" height="1.5"/><rect x="9.3" y="1.8" width="1.5" height="1.5"/><rect x="6.3" y="3.3" width="1.5" height="1.5"/></g></svg></i><span class="t" style="left:75px">Translation</span></div>
<div class="row mod"><i style="left:13px;top:9px"><svg width="8" height="10" viewBox="0 0 8 10" style="" fill="none" stroke-linecap="round" stroke-linejoin="round"><path d="M2 1.2 L6.3 5 L2 8.8" stroke="#b8b8b8" stroke-width="1.1"/></svg></i><i style="left:36px;top:9px"><svg width="10" height="10" viewBox="0 0 10 10" style="" fill="none" stroke-linecap="round" stroke-linejoin="round"><circle cx="5" cy="5" r="3.7" stroke="#c8c8c8" stroke-width="1"/></svg></i><i style="left:54px;top:7px"><svg width="14" height="14" viewBox="0 0 14 14" style="" fill="none" stroke-linecap="round" stroke-linejoin="round"><path d="M1 5.2 V10.6 L7 13.3 L13 10.6 V5.2 M1 5.2 L7 7.8 L13 5.2 M7 7.8 V13.3" stroke="#c4c4c4" stroke-width="1"/><g fill="#c4c4c4" stroke="none"><rect x="6.3" y="0.3" width="1.5" height="1.5"/><rect x="3.3" y="1.8" width="1.5" height="1.5"/><rect x="9.3" y="1.8" width="1.5" height="1.5"/><rect x="6.3" y="3.3" width="1.5" height="1.5"/></g></svg></i><span class="t" style="left:75px">Maintenance</span></div>
<div class="row mod"><i style="left:13px;top:9px"><svg width="8" height="10" viewBox="0 0 8 10" style="" fill="none" stroke-linecap="round" stroke-linejoin="round"><path d="M2 1.2 L6.3 5 L2 8.8" stroke="#b8b8b8" stroke-width="1.1"/></svg></i><i style="left:36px;top:9px"><svg width="10" height="10" viewBox="0 0 10 10" style="" fill="none" stroke-linecap="round" stroke-linejoin="round"><circle cx="5" cy="5" r="3.7" stroke="#c8c8c8" stroke-width="1"/></svg></i><i style="left:54px;top:7px"><svg width="14" height="14" viewBox="0 0 14 14" style="" fill="none" stroke-linecap="round" stroke-linejoin="round"><path d="M1 5.2 V10.6 L7 13.3 L13 10.6 V5.2 M1 5.2 L7 7.8 L13 5.2 M7 7.8 V13.3" stroke="#c4c4c4" stroke-width="1"/><g fill="#c4c4c4" stroke="none"><rect x="6.3" y="0.3" width="1.5" height="1.5"/><rect x="3.3" y="1.8" width="1.5" height="1.5"/><rect x="9.3" y="1.8" width="1.5" height="1.5"/><rect x="6.3" y="3.3" width="1.5" height="1.5"/></g></svg></i><span class="t" style="left:75px">Lato_Native</span></div>
</div></div>
<div id="center">
<div class="ctabs"><div class="ctab"><i style="left:11px;top:7px"><svg width="11" height="15" viewBox="0 0 11 15" style="" fill="none" stroke-linecap="round" stroke-linejoin="round"><path d="M0.6 0.6 H6.4 L9.9 4.1 V13.9 H0.6 Z M6.2 0.8 V4.3 H9.7" stroke="#c4c4c4" stroke-width="1"/></svg></i><span class="t" style="left:32px;color:#4d9cff;font-size:12.2px;letter-spacing:-0.15px">Home_Web [Main]</span><i style="left:141px;top:9px"><svg width="10" height="10" viewBox="0 0 10 10" style="" fill="none" stroke-linecap="round" stroke-linejoin="round"><path d="M0.8 0.8 L9.2 9.2 M9.2 0.8 L0.8 9.2" stroke="#c8c8c8" stroke-width="1.1"/></svg></i></div><i style="left:1239px;top:11px"><svg width="9" height="6" viewBox="0 0 9 6" style="" fill="none" stroke-linecap="round" stroke-linejoin="round"><path d='M0 0 H9 L4.5 5.4 Z' fill='#c4c4c4'/></svg></i></div>
<div class="ctool"><i style="left:11px;top:8px"><svg width="15" height="12" viewBox="0 0 15 12" style="" fill="none" stroke-linecap="round" stroke-linejoin="round"><path d="M0.8 0.8 H9 L14 6 L9 11.2 H0.8 Z" stroke="#f5c542" stroke-width="1.1" fill="#54452a"/></svg></i><span class="t" style="left:30px;font-size:11.8px;letter-spacing:-0.2px">Parameters (0)</span>
<i style="left:120px;top:7px"><svg width="13" height="13" viewBox="0 0 13 13" style="" fill="none" stroke-linecap="round" stroke-linejoin="round"><path d="M1 1.4 L5.4 1 L12.2 7.8 L8 12 L1.2 5.4 Z" stroke="#c4c4c4" stroke-width="1"/><circle cx="4.2" cy="4.2" r="1.2" fill="#4d9cff"/></svg></i><span class="t" style="left:138px;font-size:11.8px;letter-spacing:-0.2px">Variables (0)</span><b class="vsep" style="left:212px;top:7px;height:14px"></b>
<i style="left:223px;top:9px"><svg width="15" height="10" viewBox="0 0 15 10" style="" fill="none" stroke-linecap="round" stroke-linejoin="round"><path d="M0.7 5 C3 1.2 5.4 0.7 7.5 0.7 C9.6 0.7 12 1.2 14.3 5 C12 8.8 9.6 9.3 7.5 9.3 C5.4 9.3 3 8.8 0.7 5 Z" stroke="#3fd04f" stroke-width="1.2"/><circle cx="7.5" cy="5" r="2" stroke="#3fd04f" stroke-width="1.2"/></svg></i><i style="left:252px;top:8px"><svg width="14" height="12" viewBox="0 0 14 12" style="" fill="none" stroke-linecap="round" stroke-linejoin="round"><rect x="0.6" y="0.6" width="12.8" height="10.8" stroke="#c4c4c4" stroke-width="1"/><rect x="2.8" y="2.8" width="8.4" height="6.4" stroke="#4d9cff" stroke-width="1.1"/><rect x="4.6" y="4.6" width="4.8" height="2.8" stroke="#4d9cff" stroke-width="1"/></svg></i>
<i style="left:597.6px;top:7px"><svg width="9" height="14" viewBox="0 0 9 14" style="" fill="none" stroke-linecap="round" stroke-linejoin="round"><rect x="0.6" y="0.6" width="7.8" height="12.8" rx="1" stroke="#c4c4c4" stroke-width="1"/><path d="M3 1.2 H6" stroke="#c4c4c4" stroke-width="1"/></svg></i><i style="left:623px;top:9px"><svg width="14" height="11" viewBox="0 0 14 11" style="" fill="none" stroke-linecap="round" stroke-linejoin="round"><rect x="0.6" y="0.6" width="12.8" height="9.8" rx="1" stroke="#c4c4c4" stroke-width="1"/><circle cx="2.6" cy="5.5" r="0.5" fill="#c4c4c4"/></svg></i><b style="left:648px;top:4px;width:20px;height:20px;border:1.5px solid #4d9cff;border-radius:3px;background:#2a2a2a"></b><i style="left:651px;top:8px"><svg width="14" height="12" viewBox="0 0 14 12" style="" fill="none" stroke-linecap="round" stroke-linejoin="round"><rect x="0.6" y="0.6" width="12.8" height="7.8" stroke="#c4c4c4" stroke-width="1"/><rect x="2" y="2" width="10" height="5" fill="#8a8a8a"/><path d="M7 8.6 V10.6 M3.8 11 H10.2" stroke="#c4c4c4" stroke-width="1"/></svg></i>
<div class="seg" style="left:1067px;width:184px"><div class="s0" style="width:92px">Structure mode</div><div class="s1" style="width:92px">Design mode</div></div></div>
<div id="canvas">
<div class="white"></div>
<svg id="p1" width="800" height="204" viewBox="0 0 800 204" style="position:absolute;left:400px;top:44px;overflow:hidden">
<defs><linearGradient id="bez" gradientUnits="userSpaceOnUse" x1="172" y1="0" x2="27" y2="204"><stop offset="0" stop-color="#2a2a2a"/><stop offset="0.25" stop-color="#383838"/><stop offset="0.55" stop-color="#565656"/><stop offset="0.8" stop-color="#454545"/><stop offset="1" stop-color="#303030"/></linearGradient>
<linearGradient id="lcd" gradientUnits="userSpaceOnUse" x1="220" y1="0" x2="300" y2="204"><stop offset="0" stop-color="#9da19b"/><stop offset="1" stop-color="#acb0aa"/></linearGradient>
<filter id="b05" x="-5%" y="-5%" width="110%" height="110%"><feGaussianBlur stdDeviation="0.6"/></filter>
<filter id="b3" x="-10%" y="-10%" width="120%" height="120%"><feGaussianBlur stdDeviation="3"/></filter>
<clipPath id="lcdc"><polygon points="220,0 374.5,0 229.5,204 81,204"/></clipPath>
<clipPath id="blk"><path d="M373 0 L478.6 0 L449 41.5 C 470 55 490 75 500 86 C 512 98 522 115 522 129 C 535 124 560 128 574 133.7 L 589 137 C 596 130 612 124 629.5 125.4 C 645 127 656 142 659.5 157.7 L 663 181.7 L 663 204 L 228 204 Z"/></clipPath>
</defs>
<g filter="url(#b05)">
<path d="M648 -24 C 610 -6 575 12 552 32 C 532 50 514 70 502 96" fill="none" stroke="#0b0b0b" stroke-width="16.5"/>
<path d="M645 -27.5 C 607 -9.5 572 8.5 549 28.5 C 529 46.5 511 66.5 499 92" fill="none" stroke="#2e2e2e" stroke-width="2.5" opacity="0.8"/>
<path d="M373 0 L478.6 0 L449 41.5 C 470 55 490 75 500 86 C 512 98 522 115 522 129 C 535 124 560 128 574 133.7 L 589 137 C 596 130 612 124 629.5 125.4 C 645 127 656 142 659.5 157.7 L 663 181.7 L 663 204 L 228 204 Z" fill="#060606"/>
<g clip-path="url(#blk)">
<g filter="url(#b3)">
<path d="M497 144 L525 130 L563 128 L585 140 L571 160 L545 172 L485 198 L440 204 L420 204 Z" fill="#2c2c2c"/>
<path d="M455 62 C 480 72 505 92 512 118 L 470 128 Z" fill="#161616"/>
<path d="M596 140 C 612 130 640 130 652 150 L 660 190 L 600 204 L 540 204 Z" fill="#1a1a1a"/>
</g>
<g filter="url(#b05)"><path d="M441 113 C 450 97 478 84 499 88 C 512 92 520 104 520 118" stroke="#474747" stroke-width="3" fill="none"/><path d="M441 112 C 444 106 449 101 455 97" stroke="#6e6e6e" stroke-width="1.6" fill="none"/></g>
<polygon points="448.0,0 456.0,0 349.4,150 341.4,150" fill="#1a1a1a" />
<path d="M520 204 C 560 178 600 170 650 176" stroke="#2e2e2e" stroke-width="3" fill="none"/>
<path d="M540 204 C 575 186 610 182 655 188" stroke="#000" stroke-width="4" fill="none"/>
<path d="M446.0 140.0 L453.0 118.0" stroke="#3c3c3c" stroke-width="1"/>
<path d="M451.2 138.2 L458.2 116.2" stroke="#3c3c3c" stroke-width="1"/>
<path d="M456.4 136.4 L463.4 114.4" stroke="#3c3c3c" stroke-width="1"/>
<path d="M461.6 134.6 L468.6 112.6" stroke="#3c3c3c" stroke-width="1"/>
<path d="M466.8 132.8 L473.8 110.8" stroke="#3c3c3c" stroke-width="1"/>
<path d="M472.0 131.0 L479.0 109.0" stroke="#3c3c3c" stroke-width="1"/>
<path d="M477.2 129.2 L484.2 107.2" stroke="#3c3c3c" stroke-width="1"/>
<path d="M482.4 127.4 L489.4 105.4" stroke="#3c3c3c" stroke-width="1"/>
<path d="M487.6 125.6 L494.6 103.6" stroke="#3c3c3c" stroke-width="1"/>
<path d="M492.8 123.8 L499.8 101.8" stroke="#3c3c3c" stroke-width="1"/>
<path d="M498.0 122.0 L505.0 100.0" stroke="#3c3c3c" stroke-width="1"/>
<path d="M503.2 120.2 L510.2 98.2" stroke="#3c3c3c" stroke-width="1"/>
<path d="M508.4 118.4 L515.4 96.4" stroke="#3c3c3c" stroke-width="1"/>
<path d="M513.6 116.6 L520.6 94.6" stroke="#3c3c3c" stroke-width="1"/>
</g>
<circle cx="624.7" cy="148.5" r="23" fill="#050505"/>
<circle cx="624.7" cy="148.5" r="15" fill="#aaa59a"/><circle cx="624.7" cy="148.5" r="10.5" fill="#6a665f"/><path d="M617.5 148 L621 141.8 H628.4 L632 148 L628.4 154.2 H621 Z" fill="#4d4a46"/><path d="M612 140 A 14.5 14.5 0 0 1 636 139" stroke="#e8e6e0" stroke-width="2" fill="none"/>
<polygon points="156.0,0 230.0,0 85.0,204 11.0,204" fill="#2a2a2a" />
<polygon points="220.0,0 374.5,0 229.5,204 75.0,204" fill="url(#lcd)" />
<g clip-path="url(#lcdc)" fill="none" stroke="#747b8b" stroke-width="1.2" opacity="0.9">
<path d="M237.6 26.3 L 335 86"/><path d="M368 -6 L 400 14"/>
<rect x="0" y="0" width="58.7" height="96.2" rx="6" transform="translate(218.3 75.5) rotate(33.1)"/>
<path d="M120 170 L 200 222 M 252 150 L 300 182" opacity="0.7"/>
</g>
<polygon points="201,0 220,0 81.5,204 58,204" fill="#4b4d4f"/>
<polygon points="214,0 222,0 84,204 76,204" fill="#6a6d6e" opacity="0.6"/>
<polygon points="189.0,0 201.5,0 56.5,204 44.0,204" fill="#0c0c0c" />
<polygon points="155.0,0 189.5,0 44.5,204 10.0,204" fill="url(#bez)" />
<rect x="474.8" y="4.0" width="3.2" height="3.6" fill="#060606" transform="rotate(35 475.8 4.0)"/>
<rect x="470.1" y="10.5" width="3.2" height="3.6" fill="#060606" transform="rotate(35 471.1 10.5)"/>
<rect x="465.5" y="17.0" width="3.2" height="3.6" fill="#060606" transform="rotate(35 466.5 17.0)"/>
<rect x="460.9" y="23.5" width="3.2" height="3.6" fill="#060606" transform="rotate(35 461.9 23.5)"/>
<rect x="456.3" y="30.0" width="3.2" height="3.6" fill="#060606" transform="rotate(35 457.3 30.0)"/>
<rect x="451.7" y="36.5" width="3.2" height="3.6" fill="#060606" transform="rotate(35 452.7 36.5)"/>
<rect x="447.0" y="43.0" width="3.2" height="3.6" fill="#060606" transform="rotate(35 448.0 43.0)"/>
<rect x="442.4" y="49.5" width="3.2" height="3.6" fill="#060606" transform="rotate(35 443.4 49.5)"/>
<rect x="437.8" y="56.0" width="3.2" height="3.6" fill="#060606" transform="rotate(35 438.8 56.0)"/>
<rect x="433.2" y="62.5" width="3.2" height="3.6" fill="#060606" transform="rotate(35 434.2 62.5)"/>
<rect x="428.6" y="69.0" width="3.2" height="3.6" fill="#060606" transform="rotate(35 429.6 69.0)"/>
<rect x="423.9" y="75.5" width="3.2" height="3.6" fill="#060606" transform="rotate(35 424.9 75.5)"/>
<rect x="419.3" y="82.0" width="3.2" height="3.6" fill="#060606" transform="rotate(35 420.3 82.0)"/>
<rect x="414.7" y="88.5" width="3.2" height="3.6" fill="#060606" transform="rotate(35 415.7 88.5)"/>
<rect x="410.1" y="95.0" width="3.2" height="3.6" fill="#060606" transform="rotate(35 411.1 95.0)"/>
<rect x="405.5" y="101.5" width="3.2" height="3.6" fill="#060606" transform="rotate(35 406.5 101.5)"/>
<rect x="400.8" y="108.0" width="3.2" height="3.6" fill="#060606" transform="rotate(35 401.8 108.0)"/>
<rect x="396.2" y="114.5" width="3.2" height="3.6" fill="#060606" transform="rotate(35 397.2 114.5)"/>
<rect x="391.6" y="121.0" width="3.2" height="3.6" fill="#060606" transform="rotate(35 392.6 121.0)"/>
<rect x="387.0" y="127.5" width="3.2" height="3.6" fill="#060606" transform="rotate(35 388.0 127.5)"/>
<rect x="382.4" y="134.0" width="3.2" height="3.6" fill="#060606" transform="rotate(35 383.4 134.0)"/>
<rect x="377.7" y="140.5" width="3.2" height="3.6" fill="#060606" transform="rotate(35 378.7 140.5)"/>
</g></svg>
<b class="vd" style="left:50px;top:0;height:250px"></b><b class="vd" style="left:1209px;top:0;height:250px"></b>
<b class="hdash" style="left:50px;top:43px;width:1160px"></b><b class="hdash" style="left:50px;top:247.5px;width:1160px"></b>
<div class="collabel">Column</div>
<div class="col1"></div>
<h2 class="hd" style="left:75.2px;top:68.2px;letter-spacing:-0.41px">Top quality</h2>
<p class="bd" style="left:75px;top:122.5px">Choose Lato and rest easy. Our design and manufacturing<br>processes are certified to EN 15194 and EN 14764 quality<br>standards. And all our electric bikes are SGS certified – backed by a<br>2-year warranty for proper peace of mind.</p>
<div class="col2"><span>COLUMN</span></div>
<svg id="p2" width="507" height="339" viewBox="0 0 507 339" style="position:absolute;left:74px;top:372px;overflow:hidden">
<defs>
<filter id="bl12" x="-20%" y="-20%" width="140%" height="140%"><feGaussianBlur stdDeviation="12"/></filter>
<filter id="bl6" x="-20%" y="-20%" width="140%" height="140%"><feGaussianBlur stdDeviation="6"/></filter>
<filter id="bl1" x="-5%" y="-5%" width="110%" height="110%"><feGaussianBlur stdDeviation="0.8"/></filter>
<filter id="bl2" x="-5%" y="-5%" width="110%" height="110%"><feGaussianBlur stdDeviation="2"/></filter>
<linearGradient id="tube" gradientUnits="userSpaceOnUse" x1="230" y1="175" x2="278" y2="153"><stop offset="0" stop-color="#3e3f45"/><stop offset="0.12" stop-color="#6d6e76"/><stop offset="0.42" stop-color="#9c9ca6"/><stop offset="0.75" stop-color="#7b7c84"/><stop offset="0.93" stop-color="#5c5d64"/><stop offset="1" stop-color="#2a2a2e"/></linearGradient>
<linearGradient id="sky" x1="0" y1="0" x2="0" y2="1"><stop offset="0" stop-color="#3a84ea"/><stop offset="1" stop-color="#8dc0f6"/></linearGradient>
<linearGradient id="toptube" gradientUnits="userSpaceOnUse" x1="380" y1="10" x2="374" y2="34"><stop offset="0" stop-color="#1f2022"/><stop offset="0.35" stop-color="#595b5f"/><stop offset="0.7" stop-color="#2e2f32"/><stop offset="1" stop-color="#1a1a1c"/></linearGradient>
<linearGradient id="skin1" x1="0" y1="0" x2="1" y2="0"><stop offset="0" stop-color="#b97d66"/><stop offset="0.5" stop-color="#e0ab92"/><stop offset="1" stop-color="#edc1aa"/></linearGradient>
<pattern id="dots" width="17" height="17" patternUnits="userSpaceOnUse" patternTransform="rotate(24)"><rect width="17" height="17" fill="#221e1d"/><circle cx="4" cy="4" r="1.9" fill="#d3b29b"/><circle cx="12.5" cy="12.5" r="1.9" fill="#d3b29b"/></pattern>
<clipPath id="wheelclip"><rect x="0" y="60" width="230" height="279"/></clipPath>
</defs>
<rect width="507" height="339" fill="#1c3a16"/>
<g filter="url(#bl12)">
<rect x="-20" y="-20" width="200" height="130" fill="#22451a"/>
<ellipse cx="40" cy="55" rx="45" ry="35" fill="#2f5a22"/>
<ellipse cx="110" cy="20" rx="50" ry="25" fill="#153511"/>
<rect x="-20" y="150" width="270" height="85" fill="#0f260e"/>
<rect x="-20" y="243" width="560" height="120" fill="#558a36"/>
<rect x="-20" y="300" width="560" height="60" fill="#74a34e"/>
<ellipse cx="225" cy="190" rx="40" ry="70" fill="#133010"/>
<ellipse cx="240" cy="270" rx="40" ry="25" fill="#1c4416"/>
<rect x="195" y="-20" width="170" height="120" fill="#3f7a2c"/>
<ellipse cx="262" cy="22" rx="42" ry="22" fill="#4b8fe8"/>
<ellipse cx="218" cy="12" rx="18" ry="22" fill="#5a9cf0"/>
<ellipse cx="300" cy="45" rx="35" ry="25" fill="#4f7d44"/>
<ellipse cx="330" cy="60" rx="20" ry="14" fill="#5f9fe8"/>
<rect x="365" y="20" width="112" height="140" fill="url(#sky)"/>
<ellipse cx="400" cy="158" rx="50" ry="36" fill="#5fa534"/>
<ellipse cx="452" cy="125" rx="14" ry="36" fill="#5a9c34"/>
<ellipse cx="380" cy="160" rx="30" ry="30" fill="#3f8228"/>
<rect x="420" y="150" width="60" height="70" fill="#25521b"/>
<ellipse cx="405" cy="300" rx="40" ry="45" fill="#3f8a2c"/>
<ellipse cx="420" cy="200" rx="30" ry="35" fill="#1d4518"/>
</g>
<g clip-path="url(#wheelclip)" filter="url(#bl1)">
<path d="M4 308 L15.2 134.1" stroke="#2c302c" stroke-width="1.1" opacity="0.8"/>
<path d="M14 297 L36.0 136.4" stroke="#8f9a96" stroke-width="1.3" opacity="0.8"/>
<path d="M4 308 L56.4 141.6" stroke="#8f9a96" stroke-width="1.3" opacity="0.8"/>
<path d="M14 297 L80.4 152.3" stroke="#2c302c" stroke-width="1.1" opacity="0.8"/>
<path d="M4 308 L102.3 167.1" stroke="#8f9a96" stroke-width="1.3" opacity="0.8"/>
<path d="M14 297 L119.7 183.6" stroke="#8f9a96" stroke-width="1.3" opacity="0.8"/>
<path d="M4 308 L135.8 205.0" stroke="#2c302c" stroke-width="1.1" opacity="0.8"/>
<path d="M14 297 L147.0 226.5" stroke="#8f9a96" stroke-width="1.3" opacity="0.8"/>
<path d="M4 308 L154.9 249.6" stroke="#8f9a96" stroke-width="1.3" opacity="0.8"/>
<path d="M14 297 L159.2 273.7" stroke="#2c302c" stroke-width="1.1" opacity="0.8"/>
<path d="M4 308 L159.8 298.2" stroke="#8f9a96" stroke-width="1.3" opacity="0.8"/>
<path d="M14 297 L156.7 322.4" stroke="#8f9a96" stroke-width="1.3" opacity="0.8"/>
<path d="M4 308 L151.0 343.4" stroke="#2c302c" stroke-width="1.1" opacity="0.8"/>
<ellipse cx="10" cy="290" rx="155.5" ry="162" fill="none" stroke="#5f6366" stroke-width="15"/>
<ellipse cx="10" cy="290" rx="152" ry="158" fill="none" stroke="#a9b0b2" stroke-width="3"/>
<ellipse cx="10" cy="290" rx="160" ry="167" fill="none" stroke="#2a2c2e" stroke-width="2.5"/>
<ellipse cx="10" cy="290" rx="180" ry="187" fill="none" stroke="#202122" stroke-width="35"/>
<ellipse cx="10" cy="290" rx="183" ry="190" fill="none" stroke="#383939" stroke-width="8" stroke-dasharray="3 3"/>
<path d="M-2 105 C 30 98 60 100 85 108" stroke="#4b463f" stroke-width="14" fill="none"/>
<path d="M 26 84 C 60 76 96 82 126 101 C 170 130 206 190 214 270 C 216 300 214 325 212 345" stroke="#141516" stroke-width="13" fill="none" stroke-linecap="round"/>
<path d="M 60 80 C 96 82 128 98 150 122 C 184 160 206 215 211 285" stroke="#3e4246" stroke-width="2.5" fill="none"/>
</g>
<path d="M6 305 L176 239 M8 309 L172 336" stroke="#9aa3a2" stroke-width="1.6" filter="url(#bl1)"/>
<ellipse cx="180" cy="237" rx="9" ry="6" fill="#1d1e1f" transform="rotate(-15 180 237)"/>
<g filter="url(#bl1)">
<polygon points="102,150 117,150 100,200 72,268 62,272 72,232 90,187" fill="#161718" />
<polygon points="62,118 96,116 83,170 62,220 40,268 22,300 8,314 -2,318 -2,292 12,268 32,220 50,170" fill="#1b1c1d" />
<path d="M64 170 C 54 205 36 245 8 296" stroke="#4a4c4e" stroke-width="4" fill="none" opacity="0.8"/>
<polygon points="80,82 100,84 92,118 74,114" fill="#6c7a78" />
<polygon points="84,82 90,83 82,116 77,115" fill="#b9c6c4" />
<polygon points="66,116 92,112 96,124 88,168 60,168 62,135" fill="#1a1b1c" />
<polygon points="105,88 122,92 150,118 146,128 118,108 100,100" fill="#121313" />
<ellipse cx="142" cy="88" rx="14" ry="15" fill="#0f1010"/>
<polygon points="86,57.8 100,54 115.7,54.5 132,41.3 158.6,48 156,69.4 150,92.5 132,99 107.4,82.6 92.5,79.3 85,72.7" fill="#111213" />
<polygon points="143.8,-2 162.8,-2 166,16.5 158,49.6 127,46.3 137,16.5" fill="#232426" />
<polygon points="160,-2 166,-2 200,70 190,78 172,52 164,30" fill="#2d2e31" />
<ellipse cx="88" cy="35" rx="19" ry="15.5" fill="#2a2b2d" transform="rotate(-12 88 35)"/>
<path d="M73 27 C 68 33 69 43 77 49 L 82 46 C 76 41 76 33 79 27 Z" fill="#9aa3ad"/>
<ellipse cx="92" cy="30" rx="9" ry="5" fill="#4c4d50" transform="rotate(-15 92 30)"/>
<polygon points="94,40 104,38 108,58 100,58" fill="#161717" />
<path d="M27 82 C 45 78 70 80 82 86" stroke="#26282c" stroke-width="7" fill="none" stroke-linecap="round"/>
</g>
<g fill="none" stroke="#17181a" stroke-linecap="round" filter="url(#bl1)"><path d="M88 0 C 95 12 120 14 160 28" stroke-width="2"/><path d="M113 -2 C 118 6 130 12 140 16" stroke-width="3.5"/><path d="M165 20 C 178 50 190 80 184 96 C 176 112 140 112 124 98" stroke-width="2.4"/><path d="M72 74 L62 100 L56 124" stroke-width="2"/></g>
<path d="M70 75 C 56 88 40 100 24 110" stroke="#8e9898" stroke-width="1" fill="none" opacity="0.8"/>
<g filter="url(#bl1)">
<polygon points="163.5,-2 199,-2 355,341 310,341" fill="url(#tube)" />
<polygon points="199,-2 204,-2 246,92 240,94" fill="#222326" />
<polygon points="243,-2 334,-2 509,48 509,67 445,57" fill="url(#toptube)" />
<polygon points="416,-2 509,-2 509,50 428,26.4" fill="url(#dots)" />
<polygon points="437,56 495,63 480,86 466,118 458,110 456,86 446,68" fill="url(#dots)" />
</g>
<g filter="url(#bl1)">
<path d="M245 84 L262 78.5 L292 79 C 300 82 306 90 312 98 L 424 258 C 429 268 428 278 420 288 L 384 322 C 376 328 366 326 360 320 L 350 311 L 244 94 Z" fill="#242527"/>
<path d="M252 90 L272 84 L286 86 L404 262 C 408 270 406 278 400 284 L 374 310 C 368 314 362 312 358 306 Z" fill="#323336"/>
<path d="M286 86 L404 262 C 408 270 406 278 400 284 L 374 310" fill="none" stroke="#515459" stroke-width="5"/>
<path d="M298 84 L 420 262" stroke="#16171a" stroke-width="4"/>
<path d="M338 262 L 398 232" stroke="#151617" stroke-width="0.8"/>
<circle cx="261" cy="100" r="7" fill="#17181a" stroke="#4a4c50" stroke-width="1"/>
<path d="M252 90 L270 100 L282 104 L272 118 L262 124" fill="none" stroke="#1a1b1d" stroke-width="1"/>
</g>
<g filter="url(#bl1)">
<polygon points="360,-2 420,-2 416,20 403,46.3 380,86 373,101 352,96 330.7,70 334,52 345.5,33" fill="url(#skin1)" />
<polygon points="336,50 398,54 388,74 330,68" fill="#8b5a4c" opacity="0.72"/>
<polygon points="319,72.7 345.5,84 372,97 374.5,119 361,141 352.2,127 345.5,116 332.3,106 322.4,92.5 314,80" fill="#e0a88f" />
<polygon points="348,100 373,100 373,119 361,141 354,128" fill="#c48d76" opacity="0.75"/>
<path d="M319 77.7 L295 79.3" stroke="#b9806b" stroke-width="8.2" stroke-linecap="round"/>
<path d="M319 77.7 L295 79.3" stroke="#e6b098" stroke-width="6.6" stroke-linecap="round"/>
<path d="M332.3 86 L301.5 100.8" stroke="#b9806b" stroke-width="10.2" stroke-linecap="round"/>
<path d="M332.3 86 L301.5 100.8" stroke="#e6b098" stroke-width="8.6" stroke-linecap="round"/>
<path d="M339 99.2 L306.5 117.3" stroke="#b9806b" stroke-width="10.799999999999999" stroke-linecap="round"/>
<path d="M339 99.2 L306.5 117.3" stroke="#e6b098" stroke-width="9.2" stroke-linecap="round"/>
<path d="M352.2 107.4 L323 125.6" stroke="#b9806b" stroke-width="10.799999999999999" stroke-linecap="round"/>
<path d="M352.2 107.4 L323 125.6" stroke="#e6b098" stroke-width="9.2" stroke-linecap="round"/>
<rect x="297.5" y="96.5" width="7.5" height="9" rx="3" fill="#e8513c" transform="rotate(-28 301.25 101.0)"/>
<rect x="302.5" y="113" width="8" height="9" rx="3" fill="#e8513c" transform="rotate(-30 306.5 117.5)"/>
<rect x="319" y="121" width="8.5" height="8" rx="3" fill="#e8513c" transform="rotate(-30 323.25 125.0)"/>
<rect x="292.5" y="77" width="4.5" height="3.5" rx="3" fill="#e8513c" transform="rotate(0 294.75 78.75)"/>
</g>
<polygon points="330,-2 334,-2 430,25.5 430,54.5 345,29" fill="url(#toptube)" filter="url(#bl1)"/>
<g filter="url(#bl1)">
<polygon points="372,166 400,164 431.5,167 441,177 440,200 435,219 416.6,219 401.7,212 385.2,196 372,183 366,174" fill="#e8b8a1" />
<polygon points="410,168 441,177 438,216 420,218 408,200" fill="#efc6b2" />
<path d="M378.6 178 L353.5 187.2" stroke="#bd8670" stroke-width="10.6" stroke-linecap="round"/>
<path d="M378.6 178 L353.5 187.2" stroke="#e9b7a0" stroke-width="9" stroke-linecap="round"/>
<path d="M395.1 197 L353.5 212.8" stroke="#bd8670" stroke-width="10.799999999999999" stroke-linecap="round"/>
<path d="M395.1 197 L353.5 212.8" stroke="#e9b7a0" stroke-width="9.2" stroke-linecap="round"/>
<path d="M408.3 212 L374 230.1" stroke="#bd8670" stroke-width="10.799999999999999" stroke-linecap="round"/>
<path d="M408.3 212 L374 230.1" stroke="#e9b7a0" stroke-width="9.2" stroke-linecap="round"/>
<path d="M418.3 217 L400.5 237.2" stroke="#bd8670" stroke-width="9.2" stroke-linecap="round"/>
<path d="M418.3 217 L400.5 237.2" stroke="#e9b7a0" stroke-width="7.6" stroke-linecap="round"/>
<rect x="348.5" y="183.5" width="8.5" height="8.5" rx="3" fill="#e8513c" transform="rotate(-20 352.75 187.75)"/>
<rect x="348.5" y="208.5" width="8.5" height="8.5" rx="3" fill="#e8513c" transform="rotate(-20 352.75 212.75)"/>
<rect x="369.5" y="226" width="8.5" height="8" rx="3" fill="#e8513c" transform="rotate(-28 373.75 230.0)"/>
<rect x="397.5" y="234" width="5.5" height="6.5" rx="3" fill="#e8513c" transform="rotate(-40 400.25 237.25)"/>
</g>
<g filter="url(#bl1)">
<polygon points="484,169 509,100 509,341 445,341 470,260" fill="#161617" />
<polygon points="459.6,222 485,222 441,341 414,341" fill="#26272a" />
<path d="M466 224 L 424 340" stroke="#4a4c50" stroke-width="3" opacity="0.7"/>
<polygon points="489,61 509,59.5 509,170 492,205 470,220 435,208 446,170 464.5,115.7 476,86" fill="#3d3f43" />
<polygon points="476,86 470,100 456,150 446,170 438,200 446,206 462,160 478,116 486,92" fill="#66686c" />
<polygon points="478,120 509,112 509,122 476,132" fill="#505256" />
<polygon points="472,202 509,217 509,228 468,214" fill="#1c1d1f" />
<polygon points="430,172 446,166 444,180 434,184" fill="#9a9ca0" />
<ellipse cx="560" cy="330" rx="100" ry="110" fill="none" stroke="#0f0f10" stroke-width="16"/>
<polygon points="352,322 400,318 418,330 414,341 356,341" fill="#3a3d40" />
<polygon points="350,326 366,322 372,341 352,341" fill="#8a8d90" />
</g>
</svg>
<h2 class="hd" style="left:633.5px;top:438.2px;letter-spacing:-0.27px">Our environmental commitment</h2>
<p class="bd" style="left:633.5px;top:491px">Lato e-bikes are a greener way to get around than<br>cars and public transport, and we’re taking steps to<br>make sure they’re made in an environmentally<br>conscious way too. We’re striving to reduce our<br>production impact, and making our packaging using<br>98.6% sustainable products.</p>
</div>
<div class="vscroll"><b class="thumb"></b></div>
<div class="crumbs"><span class="t" style="left:11px">Layout</span><span class="t" style="left:79px">Page</span><span class="t" style="left:136px">Layout Grid</span>
<svg width="280" height="28" style="position:absolute;left:0;top:0" fill="none"><path d="M56.5 0 L67 14 L56.5 28 M115 0 L125.5 14 L115 28" stroke="#2a2a2a" stroke-width="1.2"/><path d="M209 0 H261 L271.5 14 L261 28 H209 L219.5 14 Z" fill="#4d9cff"/></svg>
<span class="t" style="left:229px;color:#fff">Row</span></div>
<div class="path"><span class="t" style="left:16px;text-decoration:underline">Lato_TopBar</span><i style="left:104px;top:9px"><svg width="8" height="10" viewBox="0 0 8 10" style="" fill="none" stroke-linecap="round" stroke-linejoin="round"><path d="M2 1 L6.2 5 L2 9" stroke="#b8b8b8" stroke-width="1.1"/></svg></i><span class="t" style="left:124px">Home_Web</span></div>
</div>
<div id="bottom">
<div class="btabs"><div class="bt act" style="left:0;width:87px"><span class="t" style="left:8px">Changes</span><em class="bdg" style="left:62px">3</em></div>
<div class="bt" style="left:87px;width:72px"><span class="t" style="left:8px">Errors</span><em class="bdg" style="left:47px">0</em></div>
<div class="bt" style="left:159px;width:200px"><span class="t" style="left:8px">Best Practice Recommender</span><em class="bdg blue" style="left:165px">11</em></div></div>
<div class="btool"><i style="left:9px;top:7px"><svg width="14" height="14" viewBox="0 0 14 14" style="" fill="none" stroke-linecap="round" stroke-linejoin="round"><circle cx="7" cy="7" r="6.3" stroke="#2f8f3a" stroke-width="1.1"/><path d="M10.5 7 H4 M6.3 4.6 L3.9 7 L6.3 9.4" stroke="#2f8f3a" stroke-width="1.1"/></svg></i><span class="t" style="left:26px;color:#9c9c9c">Back</span><b class="vsep" style="left:65px;top:7px;height:15px"></b>
<i style="left:77px;top:6px"><svg width="15" height="14" viewBox="0 0 15 14" style="" fill="none" stroke-linecap="round" stroke-linejoin="round"><path d="M4 13 H0.6 V0.6 H6 L9.4 4 V6.5 M5.8 0.8 V4.2 H9.2" stroke="#6a6a6a" stroke-width="1"/><path d="M5.5 10.5 H13.5 M11 8 L13.6 10.5 L11 13" stroke="#3fd04f" stroke-width="1.1"/></svg></i><span class="t" style="left:94px">Go to</span><b class="vsep" style="left:139px;top:7px;height:15px"></b>
<span class="t" style="left:155px">Tasks</span><i style="left:190px;top:13px"><svg width="6" height="4" viewBox="0 0 6 4" style="" fill="none" stroke-linecap="round" stroke-linejoin="round"><path d='M0 0 H6 L3 4 Z' fill='#e8e8e8'/></svg></i><b class="vsep" style="left:211px;top:7px;height:15px"></b>
<i style="left:223px;top:7px"><svg width="14" height="14" viewBox="0 0 14 14" style="" fill="none" stroke-linecap="round" stroke-linejoin="round"><circle cx="7" cy="7" r="6.3" stroke="#4d9cff" stroke-width="1.2"/><path d="M7 3.3 V10.3 M4.4 7.8 L7 10.4 L9.6 7.8" stroke="#4d9cff" stroke-width="1.2"/></svg></i><span class="t" style="left:240px">Pull</span>
<i style="left:277px;top:7px"><svg width="14" height="14" viewBox="0 0 14 14" style="" fill="none" stroke-linecap="round" stroke-linejoin="round"><circle cx="7" cy="7" r="6.3" stroke="#3fd04f" stroke-width="1.2"/><path d="M7 10.7 V3.7 M4.4 6.2 L7 3.6 L9.6 6.2" stroke="#3fd04f" stroke-width="1.2"/></svg></i><span class="t" style="left:294px">Commit</span><b class="vsep" style="left:351px;top:7px;height:15px"></b>
<i style="left:363px;top:7px"><svg width="14" height="14" viewBox="0 0 14 14" style="" fill="none" stroke-linecap="round" stroke-linejoin="round"><path d="M1.6 4.2 A6 6 0 1 1 1 7" stroke="#a8a8a8" stroke-width="1"/><path d="M0.6 1.6 L1.5 4.5 L4.4 3.8" stroke="#a8a8a8" stroke-width="1"/><path d="M7 3.6 V7.2 L9.3 8.6" stroke="#a8a8a8" stroke-width="1"/></svg></i><span class="t" style="left:380px">History</span>
<div class="sodc">Show on disk changes</div></div>
<div class="thead"><div style="left:1px;width:23px"></div><div style="left:25px;width:110px"><span class="t" style="left:3px">Status</span></div><div style="left:136px;width:23px"></div><div style="left:160px;width:481px"><span class="t" style="left:2px">Item</span></div><div style="left:642px;width:385px"><span class="t" style="left:3px">Module</span></div><div style="left:1028px;width:213px"><span class="t" style="left:3px">Details</span></div><div style="left:1242px;width:17px;top:0;height:30px"></div>
<i style="left:1245px;top:4px"><svg width="8" height="5" viewBox="0 0 8 5" style="" fill="none" stroke-linecap="round" stroke-linejoin="round"><path d='M0.8 4.2 L4 1 L7.2 4.2' stroke='#b8b8b8' stroke-width='1'/></svg></i><i style="left:1245px;top:18px"><svg width="8" height="5" viewBox="0 0 8 5" style="" fill="none" stroke-linecap="round" stroke-linejoin="round"><path d='M0.8 0.8 L4 4 L7.2 0.8' stroke='#b8b8b8' stroke-width='1'/></svg></i></div>
<b style="left:0;top:85px;width:1240px;height:2px;background:#4a4a4a"></b>
</div>
<div id="right">
<div class="ptabs"><div class="ptab" style="width:70px"><span class="t" style="left:8px">Properties</span></div><div class="ptab act" style="width:58px"><span class="t" style="left:8px">Toolbox</span></div></div>
<div class="ptool"><div class="seg2" style="left:85px"><div class="s1" style="width:97px">Widgets</div><div class="s0" style="width:98px">Building blocks</div></div></div>
<div class="ptool"><i style="left:9.5px;top:6px"><svg width="16" height="16" viewBox="0 0 16 16" style="" fill="none" stroke-linecap="round" stroke-linejoin="round"><path d="M3.5 1.5 H14.5 V12.5" stroke="#9a9a9a" stroke-width="1"/><rect x="1.5" y="3.5" width="11" height="11" stroke="#c4c4c4" stroke-width="1"/><path d="M4.5 7.5 L7 10.2 L9.5 7.5" stroke="#c4c4c4" stroke-width="1.1"/></svg></i><i style="left:35.5px;top:6px"><svg width="16" height="16" viewBox="0 0 16 16" style="" fill="none" stroke-linecap="round" stroke-linejoin="round"><path d="M3.5 1.5 H14.5 V12.5" stroke="#9a9a9a" stroke-width="1"/><rect x="1.5" y="3.5" width="11" height="11" stroke="#c4c4c4" stroke-width="1"/><path d="M5.7 6.5 L8.4 9 L5.7 11.5" stroke="#c4c4c4" stroke-width="1.1"/></svg></i><b class="vsep" style="left:60.5px;top:6px;height:16px"></b><i style="left:72.5px;top:6px"><svg width="16" height="16" viewBox="0 0 16 16" style="" fill="none" stroke-linecap="round" stroke-linejoin="round"><circle cx="6.7" cy="6.7" r="5" stroke="#c4c4c4" stroke-width="1.1"/><path d="M10.4 10.4 L14.6 14.6" stroke="#c4c4c4" stroke-width="1.1"/></svg></i><span class="ph" style="left:94px;top:0.5px">Search...</span></div>
<div class="tbx">
<div class="sech"><i style="left:12px;top:10px"><svg width="10" height="8" viewBox="0 0 10 8" style="" fill="none" stroke-linecap="round" stroke-linejoin="round"><path d='M1.2 2 L5 6.2 L8.8 2' stroke='#b8b8b8' stroke-width='1.1'/></svg></i><span class="t" style="left:28px">Data containers</span></div>
<div class="grid">
<div class="w"><svg width="60" height="44" viewBox="0 0 60 44" fill="none"><rect x="0.5" y="0.5" width="59" height="43" stroke="#bdbdbd" stroke-width="1" fill="none" /><path d="M7.5 5.5 L24 5.5" stroke="#4d9cff" stroke-width="1" /><rect x="7.5" y="8.5" width="45" height="6" stroke="#bdbdbd" stroke-width="1" fill="none" /><path d="M7.5 19.5 L24 19.5" stroke="#4d9cff" stroke-width="1" /><rect x="7.5" y="22.5" width="45" height="6" stroke="#bdbdbd" stroke-width="1" fill="none" /><rect x="7" y="33" width="8" height="8" fill="#4d9cff" stroke="none"/></svg><span>Data view</span></div>
<div class="w"><svg width="60" height="44" viewBox="0 0 60 44" fill="none"><rect x="0.5" y="0.5" width="59" height="43" stroke="#bdbdbd" stroke-width="1" fill="none" /><path d="M0.5 12.5 L59.5 12.5" stroke="#bdbdbd" stroke-width="1" /><path d="M5 6.5 L14.5 6.5" stroke="#4d9cff" stroke-width="1" /><path d="M25 6.5 L35 6.5" stroke="#4d9cff" stroke-width="1" /><path d="M45 6.5 L55 6.5" stroke="#4d9cff" stroke-width="1" /><path d="M3 19.5 L17 19.5" stroke="#4d9cff" stroke-width="1" /><path d="M23 19.5 L37.5 19.5" stroke="#4d9cff" stroke-width="1" /><path d="M43 19.5 L57 19.5" stroke="#4d9cff" stroke-width="1" /><path d="M3 28.5 L17 28.5" stroke="#4d9cff" stroke-width="1" /><path d="M23 28.5 L37.5 28.5" stroke="#4d9cff" stroke-width="1" /><path d="M43 28.5 L57 28.5" stroke="#4d9cff" stroke-width="1" /><path d="M3 37.5 L17 37.5" stroke="#4d9cff" stroke-width="1" /><path d="M23 37.5 L37.5 37.5" stroke="#4d9cff" stroke-width="1" /><path d="M43 37.5 L57 37.5" stroke="#4d9cff" stroke-width="1" /></svg><span>Data grid</span></div>
<div class="w"><svg width="60" height="44" viewBox="0 0 60 44" fill="none"><rect x="0.5" y="2.5" width="17" height="17" stroke="#bdbdbd" stroke-width="1" fill="none" /><rect x="3.5" y="5.5" width="11.5" height="8" fill="#4d9cff" stroke="none"/><rect x="21.5" y="2.5" width="17" height="17" stroke="#bdbdbd" stroke-width="1" fill="none" /><rect x="24.5" y="5.5" width="11.5" height="8" fill="#4d9cff" stroke="none"/><rect x="42.5" y="2.5" width="17" height="17" stroke="#bdbdbd" stroke-width="1" fill="none" /><rect x="45.5" y="5.5" width="11.5" height="8" fill="#4d9cff" stroke="none"/><rect x="0.5" y="24.5" width="17" height="17" stroke="#bdbdbd" stroke-width="1" fill="none" /><rect x="3.5" y="27.5" width="11.5" height="8" fill="#4d9cff" stroke="none"/><rect x="21.5" y="24.5" width="17" height="17" stroke="#bdbdbd" stroke-width="1" fill="none" /><rect x="24.5" y="27.5" width="11.5" height="8" fill="#4d9cff" stroke="none"/><rect x="42.5" y="24.5" width="17" height="17" stroke="#bdbdbd" stroke-width="1" fill="none" /><rect x="45.5" y="27.5" width="11.5" height="8" fill="#4d9cff" stroke="none"/></svg><span>Template grid</span></div>
<div class="w"><svg width="60" height="44" viewBox="0 0 60 44" fill="none"><path d="M0 2.5 L60 2.5" stroke="#bdbdbd" stroke-width="1" /><path d="M0 15.5 L60 15.5" stroke="#bdbdbd" stroke-width="1" /><path d="M0 28.5 L60 28.5" stroke="#bdbdbd" stroke-width="1" /><path d="M0 41.5 L60 41.5" stroke="#bdbdbd" stroke-width="1" /><rect x="7" y="5" width="8" height="8" fill="#4d9cff" stroke="none"/><path d="M19.5 8.5 L51 8.5" stroke="#4d9cff" stroke-width="1" /><rect x="7" y="18" width="8" height="8" fill="#4d9cff" stroke="none"/><path d="M19.5 21.5 L51 21.5" stroke="#4d9cff" stroke-width="1" /><rect x="7" y="31" width="8" height="8" fill="#4d9cff" stroke="none"/><path d="M19.5 34.5 L51 34.5" stroke="#4d9cff" stroke-width="1" /></svg><span>List view</span></div>
<div class="w"><svg width="60" height="44" viewBox="0 0 60 44" fill="none"><rect x="0.5" y="0.5" width="59" height="43" stroke="#bdbdbd" stroke-width="1" fill="none" /><path d="M0.5 12.5 L59.5 12.5" stroke="#bdbdbd" stroke-width="1" /><path d="M5 6.5 L14.5 6.5" stroke="#bdbdbd" stroke-width="1" /><path d="M25 6.5 L35 6.5" stroke="#bdbdbd" stroke-width="1" /><path d="M45 6.5 L55 6.5" stroke="#bdbdbd" stroke-width="1" /><rect x="4.5" y="16.5" width="14" height="6" stroke="#4d9cff" stroke-width="1.1" fill="none" /><path d="M26.5 18.5 L34 18.5" stroke="#bdbdbd" stroke-width="1" /><path d="M42 18.5 L56 18.5" stroke="#4d9cff" stroke-width="1" /><rect x="4.5" y="25.5" width="14" height="6" stroke="#4d9cff" stroke-width="1.1" fill="none" /><path d="M26.5 27.5 L34 27.5" stroke="#bdbdbd" stroke-width="1" /><path d="M42 27.5 L56 27.5" stroke="#4d9cff" stroke-width="1" /><rect x="4.5" y="34.5" width="14" height="6" stroke="#4d9cff" stroke-width="1.1" fill="none" /><path d="M26.5 36.5 L34 36.5" stroke="#bdbdbd" stroke-width="1" /><path d="M42 36.5 L56 36.5" stroke="#4d9cff" stroke-width="1" /></svg><span>Data grid 2</span></div>
<div class="w"><svg width="60" height="44" viewBox="0 0 60 44" fill="none"><rect x="4.5" y="2.5" width="51.5" height="39" stroke="#bdbdbd" stroke-width="1" fill="none" /><path d="M4.5 15.5 L56 15.5" stroke="#bdbdbd" stroke-width="1" /><path d="M4.5 28.5 L56 28.5" stroke="#bdbdbd" stroke-width="1" /><path d="M21.5 2.5 L21.5 41.5" stroke="#bdbdbd" stroke-width="1" /><path d="M38.5 2.5 L38.5 28.5" stroke="#bdbdbd" stroke-width="1" /><rect x="7" y="5" width="11.7" height="5" fill="#4d9cff" stroke="none"/><rect x="24" y="5" width="11.7" height="5" fill="#4d9cff" stroke="none"/><rect x="41" y="5" width="11.7" height="5" fill="#4d9cff" stroke="none"/><rect x="7" y="18" width="11.7" height="5" fill="#4d9cff" stroke="none"/><rect x="24" y="18" width="11.7" height="5" fill="#4d9cff" stroke="none"/><rect x="41" y="18" width="11.7" height="5" fill="#4d9cff" stroke="none"/><rect x="7" y="31" width="11.7" height="5" fill="#4d9cff" stroke="none"/></svg><span>Gallery</span></div>
<div class="w"><svg width="60" height="44" viewBox="0 0 60 44" fill="none"><rect x="7.5" y="2.5" width="24" height="10" stroke="#4d9cff" stroke-width="1.1" fill="none" /><path d="M16.5 12.5 V36.5 H28.5 M16.5 21.5 H28.5" stroke="#bdbdbd" stroke-width="1" fill="none" /><rect x="28.5" y="16.5" width="24" height="10" stroke="#4d9cff" stroke-width="1.1" fill="none" /><rect x="28.5" y="31.5" width="24" height="10" stroke="#4d9cff" stroke-width="1.1" fill="none" /></svg><span>Tree node</span></div>
</div>
<div class="sech"><i style="left:12px;top:10px"><svg width="10" height="8" viewBox="0 0 10 8" style="" fill="none" stroke-linecap="round" stroke-linejoin="round"><path d='M1.2 2 L5 6.2 L8.8 2' stroke='#b8b8b8' stroke-width='1.1'/></svg></i><span class="t" style="left:28px">Text</span></div>
<div class="grid">
<div class="w"><svg width="60" height="44" viewBox="0 0 60 44" fill="none"><path d="M7.5 21.5 L12.2 4.5 H15.8 L20.5 21.5 M9 16.5 H19" stroke="#4d9cff" stroke-width="1.1" fill="none" /><path d="M25 9.5 L52 9.5" stroke="#bdbdbd" stroke-width="1" /><path d="M25 19.5 L52 19.5" stroke="#bdbdbd" stroke-width="1" /><path d="M7.5 29.5 L52 29.5" stroke="#bdbdbd" stroke-width="1" /><path d="M7.5 39.5 L52 39.5" stroke="#bdbdbd" stroke-width="1" /></svg><span>Text</span></div>
<div class="w"><svg width="60" height="44" viewBox="0 0 60 44" fill="none"><path d="M16.5 39.5 L24.5 5.5 H35 L43.5 39.5 M19.8 27.5 H40.2" stroke="#bdbdbd" stroke-width="1" fill="none" /></svg><span>Label</span></div>
<div class="w"><svg width="60" height="44" viewBox="0 0 60 44" fill="none"><path d="M16 5.5 L46 5.5" stroke="#bdbdbd" stroke-width="1" /><path d="M31 5.5 L31 39.5" stroke="#bdbdbd" stroke-width="1" /></svg><span>Page title</span></div>
</div>
<div class="sech"><i style="left:12px;top:10px"><svg width="10" height="8" viewBox="0 0 10 8" style="" fill="none" stroke-linecap="round" stroke-linejoin="round"><path d='M1.2 2 L5 6.2 L8.8 2' stroke='#b8b8b8' stroke-width='1.1'/></svg></i><span class="t" style="left:28px">Structure</span></div>
<div class="grid">
<div class="w"><svg width="60" height="44" viewBox="0 0 60 44" fill="none"><rect x="0.5" y="0.5" width="59" height="43" stroke="#bdbdbd" stroke-width="1" fill="none" /><path d="M19.5 0.5 L19.5 43.5" stroke="#bdbdbd" stroke-width="1" /><path d="M40.5 0.5 L40.5 43.5" stroke="#bdbdbd" stroke-width="1" /></svg><span>Layout grid</span></div>
<div class="w"><svg width="60" height="44" viewBox="0 0 60 44" fill="none"><rect x="0.7" y="0.7" width="58.6" height="42.6" stroke="#4d9cff" stroke-width="1.3" fill="none" stroke-dasharray="9.5 6.2" stroke-dashoffset="4.75" stroke-linecap="butt"/></svg><span>Container</span></div>
<div class="w"><svg width="60" height="44" viewBox="0 0 60 44" fill="none"><rect x="0.5" y="0.5" width="59" height="43" stroke="#bdbdbd" stroke-width="1" fill="none" /><path d="M0.5 8.5 L59.5 8.5" stroke="#bdbdbd" stroke-width="1" /><path d="M4.5 4.5 L29 4.5" stroke="#4d9cff" stroke-width="1" /><path d="M52.5 4.5 L56.5 4.5" stroke="#bdbdbd" stroke-width="1" /></svg><span>Group box</span></div>
<div class="w"><svg width="60" height="44" viewBox="0 0 60 44" fill="none"><rect x="0.5" y="8.5" width="59" height="35" stroke="#bdbdbd" stroke-width="1" fill="none" /><path d="M0.5 8.5 V0.5 H42.5 V8.5 M14.5 0.5 V8.5 M28.5 0.5 V8.5" stroke="#bdbdbd" stroke-width="1" fill="none" /><path d="M3.5 4.5 L11.5 4.5" stroke="#4d9cff" stroke-width="1" /><path d="M17.5 4.5 L25.5 4.5" stroke="#bdbdbd" stroke-width="1" /><path d="M31.5 4.5 L39.5 4.5" stroke="#bdbdbd" stroke-width="1" /></svg><span>Tab container</span></div>
<div class="w"><svg width="60" height="44" viewBox="0 0 60 44" fill="none"><rect x="0.5" y="0.5" width="59" height="43" stroke="#bdbdbd" stroke-width="1" fill="none" /><path d="M0.5 8.5 L59.5 8.5" stroke="#bdbdbd" stroke-width="1" /><path d="M30 10.8 L35.2 17 H24.8 Z M30 40.5 L35.2 34.2 H24.8 Z M14.5 26 L20.8 20.8 V31.2 Z M45.5 26 L39.2 20.8 V31.2 Z" fill="#4d9cff" stroke="none"/></svg><span>Scroll container</span></div>
<div class="w"><svg width="60" height="44" viewBox="0 0 60 44" fill="none"><rect x="0.5" y="0.5" width="59" height="43" stroke="#bdbdbd" stroke-width="1" fill="none" /><path d="M0.5 7.5 L59.5 7.5" stroke="#bdbdbd" stroke-width="1" /><path d="M0.5 16.5 L59.5 16.5" stroke="#bdbdbd" stroke-width="1" /><path d="M0.5 25.5 L59.5 25.5" stroke="#bdbdbd" stroke-width="1" /><path d="M0.5 34.5 L59.5 34.5" stroke="#bdbdbd" stroke-width="1" /><path d="M15.5 7.5 L15.5 43.5" stroke="#bdbdbd" stroke-width="1" /><path d="M30.5 7.5 L30.5 43.5" stroke="#bdbdbd" stroke-width="1" /><path d="M45.5 7.5 L45.5 43.5" stroke="#bdbdbd" stroke-width="1" /></svg><span>Table</span></div>
<div class="w"><svg width="60" height="44" viewBox="0 0 60 44" fill="none"><rect x="0.5" y="0.5" width="59" height="43" stroke="#bdbdbd" stroke-width="1" fill="none" stroke-dasharray="4.4 2.2" stroke-linecap="butt"/><path d="M0.5 14.5 L59.5 14.5" stroke="#bdbdbd" stroke-width="1" stroke-dasharray="4.4 2.2" stroke-linecap="butt"/><path d="M0.5 29.5 L59.5 29.5" stroke="#bdbdbd" stroke-width="1" stroke-dasharray="4.4 2.2" stroke-linecap="butt"/></svg><span>Navigation list</span></div>
<div class="w"><svg width="60" height="44" viewBox="0 0 60 44" fill="none"><rect x="0.5" y="0.5" width="59" height="43" stroke="#bdbdbd" stroke-width="1" fill="none" /><path d="M0.5 8.5 L59.5 8.5" stroke="#bdbdbd" stroke-width="1" /><path d="M38 4.5 L56 4.5" stroke="#bdbdbd" stroke-width="1" stroke-dasharray="4 2.8" stroke-linecap="butt"/><rect x="4.7" y="12.5" width="51" height="27" stroke="#3fd04f" stroke-width="1.2" fill="none" stroke-dasharray="8 7" stroke-dashoffset="4" stroke-linecap="butt"/></svg><span>Snippet call</span></div>
<div class="w"><svg width="60" height="44" viewBox="0 0 60 44" fill="none"><rect x="0.5" y="0.5" width="59" height="43" stroke="#bdbdbd" stroke-width="1" fill="none" /><path d="M0.5 8.5 L59.5 8.5" stroke="#bdbdbd" stroke-width="1" /><path d="M0.5 16.5 L59.5 16.5" stroke="#bdbdbd" stroke-width="1" /><path d="M5 4.5 L30 4.5" stroke="#4d9cff" stroke-width="1" /><path d="M5 12.5 L30 12.5" stroke="#4d9cff" stroke-width="1" /><path d="M48.5 3.3 L51.5 6 L54.5 3.3" stroke="#bdbdbd" stroke-width="1" fill="none" /><path d="M48.5 13.8 L51.5 11 L54.5 13.8" stroke="#bdbdbd" stroke-width="1" fill="none" /></svg><span>Accordion</span></div>
</div>
<div class="sech"><i style="left:12px;top:10px"><svg width="10" height="8" viewBox="0 0 10 8" style="" fill="none" stroke-linecap="round" stroke-linejoin="round"><path d='M1.2 2 L5 6.2 L8.8 2' stroke='#b8b8b8' stroke-width='1.1'/></svg></i><span class="t" style="left:28px">Input elements</span></div>
<div class="grid">
<div class="w"><svg width="60" height="44" viewBox="0 0 60 44" fill="none"><rect x="0.5" y="10.5" width="59" height="23" stroke="#bdbdbd" stroke-width="1" fill="none" /><path d="M5.800000000000001 14.5 H11.8 M5.800000000000001 28.5 H11.8 M8.8 14.5 V28.5" stroke="#4d9cff" stroke-width="1.1" fill="none" /></svg><span>Text box</span></div>
<div class="w"><svg width="60" height="44" viewBox="0 0 60 44" fill="none"><rect x="0.5" y="0.5" width="59" height="43" stroke="#bdbdbd" stroke-width="1" fill="none" /><path d="M5.800000000000001 5.5 H11.8 M5.800000000000001 17.8 H11.8 M8.8 5.5 V17.8" stroke="#4d9cff" stroke-width="1.1" fill="none" /><path d="M37.8 35.7 L51.8 22.4" stroke="#4d9cff" stroke-width="1.1" /><path d="M43.6 38 L54.7 28" stroke="#4d9cff" stroke-width="1.1" /><path d="M50.3 39.4 L54.7 34.7" stroke="#4d9cff" stroke-width="1.1" /></svg><span>Text area</span></div>
<div class="w"><svg width="60" height="44" viewBox="0 0 60 44" fill="none"><rect x="0.5" y="10.5" width="59" height="23" stroke="#bdbdbd" stroke-width="1" fill="none" /><path d="M37.8 17.5 H53.8 L45.8 27.5 Z" stroke="#4d9cff" stroke-width="1.1" fill="none" /></svg><span>Drop-down</span></div>
<div class="w"><svg width="60" height="44" viewBox="0 0 60 44" fill="none"><rect x="15.5" y="6.5" width="31.5" height="31.5" stroke="#bdbdbd" stroke-width="1" fill="none" /><path d="M20.2 23.1 L28 29.7 L41.8 15.9" stroke="#4d9cff" stroke-width="1.2" fill="none" /></svg><span>Check box</span></div>
<div class="w"><svg width="60" height="44" viewBox="0 0 60 44" fill="none"><circle cx="30" cy="22" r="18.7" stroke="#bdbdbd" stroke-width="1" fill="none"/><circle cx="30" cy="22" r="10.2" fill="#4d9cff"/></svg><span>Radio buttons</span></div>
<div class="w"><svg width="60" height="44" viewBox="0 0 60 44" fill="none"><rect x="0.5" y="3.5" width="59" height="40" stroke="#bdbdbd" stroke-width="1" fill="none" /><path d="M0.5 10.5 L59.5 10.5" stroke="#bdbdbd" stroke-width="1" /><path d="M11.5 0 L11.5 6.5" stroke="#bdbdbd" stroke-width="1" /><path d="M50.5 0 L50.5 6.5" stroke="#bdbdbd" stroke-width="1" /><rect x="6.5" y="16.5" width="8" height="8" stroke="#bdbdbd" stroke-width="1" fill="none" /><rect x="19.5" y="16.5" width="8" height="8" stroke="#bdbdbd" stroke-width="1" fill="none" /><rect x="32.5" y="16.5" width="8" height="8" stroke="#4d9cff" stroke-width="1.1" fill="none" /><path d="M34.3 20.1 L36.3 22.5 L42.0 15.5" stroke="#4d9cff" stroke-width="1.1" fill="none" /><rect x="45.5" y="16.5" width="8" height="8" stroke="#bdbdbd" stroke-width="1" fill="none" /><rect x="6.5" y="28.5" width="8" height="8" stroke="#bdbdbd" stroke-width="1" fill="none" /><rect x="19.5" y="28.5" width="8" height="8" stroke="#bdbdbd" stroke-width="1" fill="none" /><rect x="32.5" y="28.5" width="8" height="8" stroke="#bdbdbd" stroke-width="1" fill="none" /><rect x="45.5" y="28.5" width="8" height="8" stroke="#bdbdbd" stroke-width="1" fill="none" /></svg><span>Date picker</span></div>
<div class="w"><svg width="60" height="44" viewBox="0 0 60 44" fill="none"><path d="M1.5 29 V10.5 H60 V33.5 H26.5" stroke="#bdbdbd" stroke-width="1" fill="none" /><path d="M37.8 17.5 H53.8 L45.8 28 Z" stroke="#bdbdbd" stroke-width="1" fill="none" /><rect x="13.5" y="24.5" width="7.5" height="7.5" stroke="#4d9cff" stroke-width="1.1" fill="none" /><rect x="1.5" y="36.2" width="7.5" height="7.5" stroke="#4d9cff" stroke-width="1.1" fill="none" /><path d="M9 36.2 L13.5 32" stroke="#4d9cff" stroke-width="1.1" /></svg><span>Reference<br>selector</span></div>
<div class="w"><svg width="60" height="44" viewBox="0 0 60 44" fill="none"><path d="M32.8 37.5 H1.5 V0.8 H54.8 V18.8" stroke="#bdbdbd" stroke-width="1" fill="none" /><path d="M1.5 12.5 L54.8 12.5" stroke="#bdbdbd" stroke-width="1" /><path d="M6.2 6.5 L14.2 6.5" stroke="#bdbdbd" stroke-width="1" /><path d="M22.6 6.5 L31.6 6.5" stroke="#bdbdbd" stroke-width="1" /><path d="M40.8 6.5 L49 6.5" stroke="#bdbdbd" stroke-width="1" /><path d="M4.3 19.5 L15.9 19.5" stroke="#bdbdbd" stroke-width="1" /><path d="M21.4 19.5 L32.8 19.5" stroke="#bdbdbd" stroke-width="1" /><path d="M38.9 19.5 L51 19.5" stroke="#bdbdbd" stroke-width="1" /><path d="M4.3 28.5 L15.9 28.5" stroke="#bdbdbd" stroke-width="1" /><path d="M21.4 28.5 L32.8 28.5" stroke="#bdbdbd" stroke-width="1" /><rect x="53.3" y="24.7" width="7.3" height="7.3" stroke="#4d9cff" stroke-width="1.1" fill="none" /><rect x="41.3" y="36.3" width="7.3" height="7.3" stroke="#4d9cff" stroke-width="1.1" fill="none" /><path d="M48.6 36.3 L53.3 32" stroke="#4d9cff" stroke-width="1.1" /></svg><span>Reference set<br>selector</span></div>
</div>
</div>
<b class="sb2"></b>
<div class="vt"><div class="a"><i style="left:8px;top:3px"><svg width="16" height="16" viewBox="0 0 16 16" style="" fill="none" stroke-linecap="round" stroke-linejoin="round"><rect x="1" y="1" width="5.6" height="5.6" rx="0.8" stroke="#1d2f4a" stroke-width="1.1"/><rect x="1" y="9.4" width="5.6" height="5.6" rx="0.8" stroke="#1d2f4a" stroke-width="1.1"/><rect x="9.4" y="1" width="5.6" height="5.6" rx="0.8" stroke="#1d2f4a" stroke-width="1.1"/><rect x="9.4" y="9.4" width="5.6" height="5.6" rx="0.8" stroke="#1d2f4a" stroke-width="1.1"/></svg></i></div><div class="b"><i style="left:9px;top:5px"><svg width="14" height="12" viewBox="0 0 14 12" style="" fill="none" stroke-linecap="round" stroke-linejoin="round"><path d="M0.5 1.5 H13.5" stroke="#c8c8c8" stroke-width="1"/><path d="M0.5 4.5 H13.5" stroke="#c8c8c8" stroke-width="1"/><path d="M0.5 7.5 H13.5" stroke="#c8c8c8" stroke-width="1"/><path d="M0.5 10.5 H13.5" stroke="#c8c8c8" stroke-width="1"/></svg></i></div></div>
</div>
<div id="status"><span class="t" style="left:14px;top:0.5px">Ready</span>
<i style="left:1559px;top:5px"><svg width="17" height="16" viewBox="0 0 17 16" style="" fill="none" stroke-linecap="round" stroke-linejoin="round"><circle cx="3" cy="13" r="2" stroke="#c8c8c8" stroke-width="1"/><circle cx="14" cy="3" r="2" stroke="#c8c8c8" stroke-width="1"/><path d="M3 11 V1 M3 11 C3 7.5 14 9 14 5" stroke="#c8c8c8" stroke-width="1"/></svg></i><span class="t" style="left:1581px;top:0.5px">Ryan</span>
<i style="left:1623px;top:8px"><svg width="9" height="12" viewBox="0 0 9 12" style="" fill="none" stroke-linecap="round" stroke-linejoin="round"><path d="M4.5 0.5 V11 M0.8 7.4 L4.5 11.2 L8.2 7.4" stroke="#d8d8d8" stroke-width="1.1"/></svg></i><span class="t" style="left:1638px;top:0.5px">0</span>
<i style="left:1662px;top:8px"><svg width="9" height="12" viewBox="0 0 9 12" style="" fill="none" stroke-linecap="round" stroke-linejoin="round"><path d="M4.5 11.5 V1 M0.8 4.6 L4.5 0.8 L8.2 4.6" stroke="#d8d8d8" stroke-width="1.1"/></svg></i><span class="t" style="left:1677px;top:0.5px">0</span>
<div class="lang"><span class="t" style="left:6px;top:0;line-height:22px">English, United States (default)</span><i style="left:183px;top:10px"><svg width="7" height="4" viewBox="0 0 7 4" style="" fill="none" stroke-linecap="round" stroke-linejoin="round"><path d='M0 0 H7 L3.5 4 Z' fill='#a8a8a8'/></svg></i></div></div>
</body></html>
